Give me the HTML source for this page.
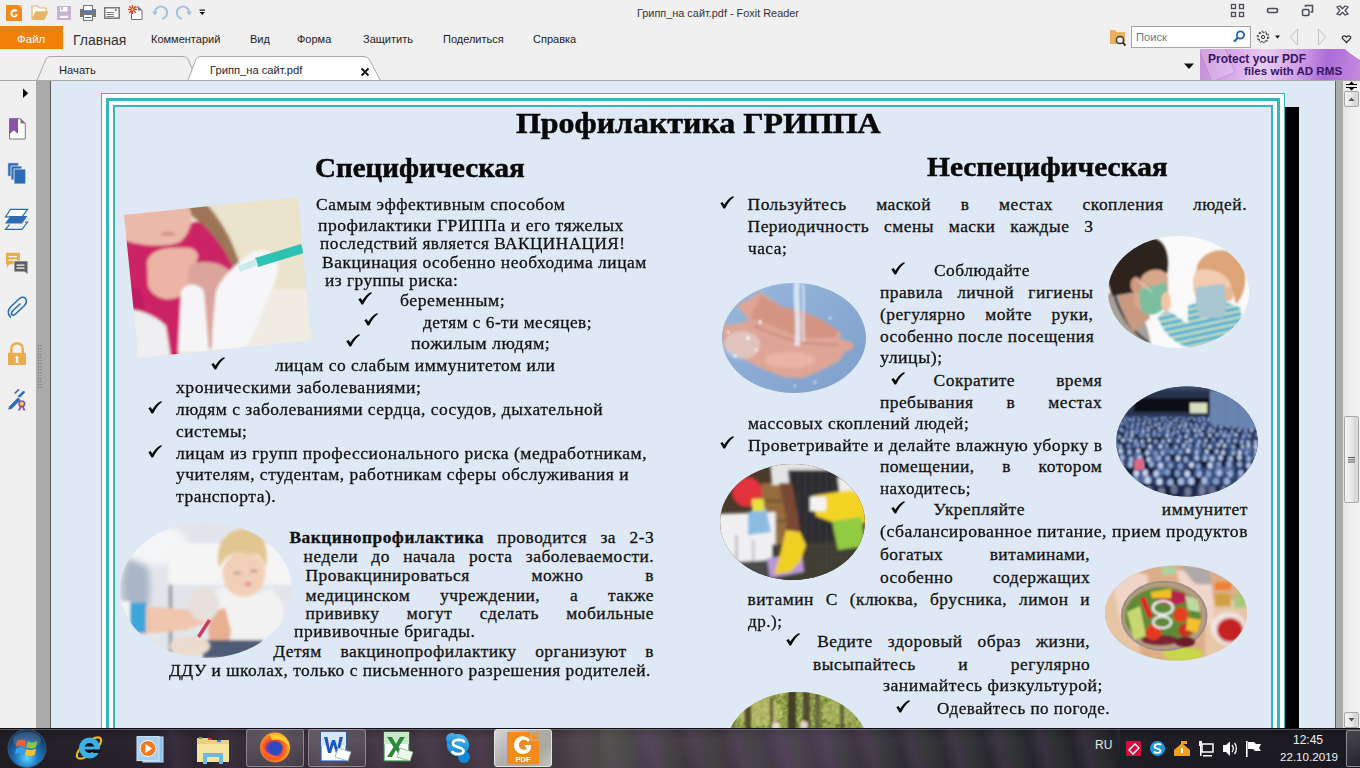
<!DOCTYPE html>
<html><head><meta charset="utf-8">
<style>
*{margin:0;padding:0;box-sizing:border-box}
html,body{width:1360px;height:768px;overflow:hidden;background:#f0f0f0;font-family:"Liberation Sans",sans-serif;position:relative}
.a{position:absolute}
.ui{font-family:"Liberation Sans",sans-serif;font-size:11px;color:#222;white-space:nowrap;line-height:13px}
.doc{font-family:"Liberation Serif",serif;color:#111;white-space:nowrap}
.t{position:absolute;font-family:"Liberation Serif",serif;font-size:17.4px;letter-spacing:0.5px;line-height:20px;color:#121212;white-space:nowrap;text-align:justify;text-align-last:justify;-webkit-text-stroke:0.3px #121212}
.tl{text-align:left;text-align-last:left;transform-origin:0 0}
.hd{font-weight:bold;color:#080808;transform-origin:0 0;-webkit-text-stroke:0.5px #080808}
.ck{position:absolute;font-family:"Liberation Serif",serif;font-size:17px;line-height:20px;color:#111}
</style></head><body>

<!-- ===== TITLE BAR ===== -->
<div id="titlebar" class="a" style="left:0;top:0;width:1360px;height:26px;background:#f0f0f0"></div>
<div class="a ui" style="left:637px;top:7px;font-size:10.9px;color:#333">Грипп_на сайт.pdf - Foxit Reader</div>

<!-- quick access toolbar icons -->
<svg class="a" style="left:0;top:0" width="215" height="26" viewBox="0 0 215 26">
<path d="M6,5 L18.5,5 L22,8.5 L22,21 L6,21 Z" fill="#f28a1e"/>
<path d="M19,5 L22,5 L22,8 Z" fill="#f28a1e" opacity="0.6"/>
<path d="M17.5,10.2 C16,8.6 12.5,8.8 11,11 C9.6,13.3 10.6,16.6 13.4,17.3 C15.6,17.8 17.6,16.4 17.8,14.2 L14.2,14.2 L15.4,15.8 C14.2,16.4 12.6,15.6 12.4,14 C12.2,12.2 14.2,10.8 16,11.8 Z" fill="#fff"/>
<path d="M32,6 L38,6 L39.5,8 L46,8 L46,12 L36,12 L32,19.8 Z" fill="#fff" stroke="#e8b468" stroke-width="1.2"/>
<path d="M35.5,11.5 L48.2,11.5 L44.5,19.9 L32,19.9 Z" fill="#e8b468"/>
<rect x="57" y="6" width="14" height="14" fill="#c6b0d4"/>
<rect x="60" y="7" width="7.5" height="4.5" fill="#fff"/>
<rect x="61" y="7" width="1.8" height="3" fill="#c6b0d4"/>
<rect x="60" y="15.8" width="8" height="2.2" fill="#fff"/>
<rect x="80" y="9" width="16" height="8" fill="#767676"/>
<rect x="83.5" y="5.5" width="9" height="7" fill="#fff" stroke="#767676" stroke-width="1"/>
<rect x="83" y="10.2" width="10" height="1.8" fill="#3f7fc4"/>
<rect x="83.5" y="14.5" width="9" height="6" fill="#fff" stroke="#767676" stroke-width="1"/>
<rect x="85" y="17" width="6" height="1" fill="#3f7fc4"/>
<rect x="104.8" y="7.8" width="14.4" height="10.4" fill="#fff" stroke="#6e6e6e" stroke-width="1.4"/>
<rect x="115" y="9.3" width="1.6" height="1.6" fill="#1a5fb4"/>
<rect x="106.5" y="12" width="7.5" height="0.9" fill="#6e6e6e"/>
<rect x="106.5" y="14" width="7.5" height="0.9" fill="#6e6e6e"/>
<rect x="106.5" y="16" width="7.5" height="0.9" fill="#6e6e6e"/>
<path d="M131.5,10 L138,6.5 L142,10.5 L142,19.5 L131.5,19.5 Z" fill="#fff" stroke="#707070" stroke-width="1"/>
<path d="M138,6.5 L142,10.5 L138,10.5 Z" fill="#707070"/>
<g stroke="#d8421e" stroke-width="1.3"><line x1="128" y1="9.5" x2="137" y2="9.5"/><line x1="132.5" y1="5" x2="132.5" y2="14"/><line x1="129.3" y1="6.3" x2="135.7" y2="12.7"/><line x1="135.7" y1="6.3" x2="129.3" y2="12.7"/></g>
<circle cx="132.5" cy="9.5" r="1" fill="#fff"/>
<path d="M154.8,13 A6.2,6.2 0 1 1 162,18.8" fill="none" stroke="#a4c2e0" stroke-width="2"/>
<path d="M152,11.5 L157.6,11.5 L154.8,15.5 Z" fill="#a4c2e0"/>
<path d="M189.2,13 A6.2,6.2 0 1 0 182,18.8" fill="none" stroke="#a4c2e0" stroke-width="2"/>
<path d="M192,11.5 L186.4,11.5 L189.2,15.5 Z" fill="#a4c2e0"/>
<rect x="199.5" y="9.5" width="5.5" height="1.2" fill="#111"/>
<path d="M199.5,12 L205,12 L202.25,15 Z" fill="#111"/>
</svg>
<!-- window controls -->
<svg class="a" style="left:1225px;top:0" width="135" height="26" viewBox="1225 0 135 26">
<g fill="none" stroke="#4a4e5c" stroke-width="1.3">
<rect x="1231.5" y="4.5" width="4" height="4"/><rect x="1239.5" y="4.5" width="4" height="4"/>
<rect x="1231.5" y="12.5" width="4" height="4"/><rect x="1239.5" y="12.5" width="4" height="4"/>
<rect x="1267.5" y="8.5" width="10" height="4" rx="1.5" stroke-width="1.6"/>
<rect x="1302.5" y="9.5" width="6.5" height="6" rx="1.2" stroke-width="1.5"/>
<path d="M1305.5,7 L1305.5,5.5 L1312.5,5.5 L1312.5,12 L1310.5,12" stroke-width="1.5"/>
</g>
<path d="M1337,7 L1340,6 L1342.5,8.7 L1345,6 L1348,7 L1345,10.5 L1348,14 L1345,15 L1342.5,12.3 L1340,15 L1337,14 L1340,10.5 Z" fill="#fff" stroke="#4a4e5c" stroke-width="1.3"/>
</svg>
<!-- search row -->
<svg class="a" style="left:1105px;top:24px" width="255" height="28" viewBox="1105 24 255 28">
<path d="M1110,30 L1115,30 L1116.5,32 L1125,32 L1125,44 L1110,44 Z" fill="#e8b060"/>
<circle cx="1120" cy="40" r="3.6" fill="#f0f0f0" stroke="#333" stroke-width="1.5"/>
<line x1="1122.6" y1="42.6" x2="1125.5" y2="45.5" stroke="#333" stroke-width="1.8"/>
<rect x="1131.5" y="26.5" width="119" height="21" fill="#fff" stroke="#a6a6a6" stroke-width="1"/>
<circle cx="1240.5" cy="35" r="3.6" fill="none" stroke="#1e64b4" stroke-width="1.8"/>
<line x1="1237.8" y1="37.8" x2="1234" y2="41.6" stroke="#1e64b4" stroke-width="2.2"/>
<g transform="translate(1263,37)"><circle r="4.8" fill="none" stroke="#333" stroke-width="1.1" stroke-dasharray="2 1.6"/><circle r="5.8" fill="none" stroke="#333" stroke-width="1" stroke-dasharray="1.6 2"/><circle r="1.6" fill="none" stroke="#333" stroke-width="1"/></g>
<path d="M1275,35.5 L1280,35.5 L1277.5,38.5 Z" fill="#111"/>
<path d="M1297.5,29 L1290.5,37 L1297.5,45 Z" fill="none" stroke="#c4c4c4" stroke-width="1"/>
<path d="M1318.5,29 L1325.5,37 L1318.5,45 Z" fill="none" stroke="#c4c4c4" stroke-width="1"/>
<path d="M1342.5,38.5 C1341.5,36 1344.5,35 1346.5,37 C1348.5,35 1351.5,36 1350.5,38.5 L1346.5,42.5 Z" fill="none" stroke="#333" stroke-width="1.3"/>
</svg>
<div class="a ui" style="left:1136px;top:31px;color:#6e7888;font-size:11.2px">Поиск</div>

<!-- ===== MENU ROW ===== -->
<div class="a" style="left:0;top:26px;width:63px;height:23px;background:#f0800a"></div>
<div class="a ui" style="left:17px;top:33px;color:#fff;font-size:11.5px">Файл</div>
<div class="a ui" style="left:73px;top:32px;font-size:14px;line-height:16px;color:#333">Главная</div>
<div class="a ui" style="left:151px;top:33px">Комментарий</div>
<div class="a ui" style="left:250px;top:33px">Вид</div>
<div class="a ui" style="left:297px;top:33px">Форма</div>
<div class="a ui" style="left:363px;top:33px">Защитить</div>
<div class="a ui" style="left:443px;top:33px">Поделиться</div>
<div class="a ui" style="left:533px;top:33px">Справка</div>

<!-- ===== TABS ROW ===== -->
<!-- tabs -->
<svg class="a" style="left:0;top:48px" width="400" height="34" viewBox="0 48 400 34">
<path d="M37,80.5 L46,59 Q47.5,56.5 50,56.5 L183,56.5 Q186,56.5 188,59 L197,80.5" fill="#f0f0f0" stroke="#a9a9a9" stroke-width="1"/>
<path d="M188,80.5 L196,59 Q197.5,56.5 200,56.5 L364,56.5 Q367,56.5 369,59 L380.5,80.5" fill="#fff" stroke="#a9a9a9" stroke-width="1"/>
<path d="M361.5,68.5 L368.5,75.5 M368.5,68.5 L361.5,75.5" stroke="#111" stroke-width="1.8"/>
</svg>
<div class="a ui" style="left:59px;top:64px;font-size:11.2px;color:#1e1e2a">Начать</div>
<div class="a ui" style="left:210px;top:64px;font-size:11.2px;color:#1e1e2a">Грипп_на сайт.pdf</div>
<svg class="a" style="left:1183px;top:62px" width="12" height="8" viewBox="0 0 12 8"><path d="M1,1.5 L11,1.5 L6,7 Z" fill="#111"/></svg>
<!-- ad banner -->
<div class="a" style="left:1200px;top:49px;width:160px;height:31px;background:linear-gradient(100deg,#c58cd8 0%,#dcb0ec 25%,#e9ccf3 40%,#cf9ee6 62%,#ac6cd6 78%,#c48ae0 100%);overflow:hidden">
<div class="a" style="left:4px;top:-6px;width:26px;height:36px;background:rgba(255,255,255,0.18);border:1px solid rgba(150,90,180,0.35);transform:rotate(-22deg)"></div>
<svg class="a" style="left:143px;top:0" width="17" height="12" viewBox="0 0 17 12"><path d="M2,0 L17,0 L17,11 C13,8 8,5 2,0 Z" fill="#f0f0f0"/><path d="M2,0 C8,5 13,8 17,11 L12,6 Z" fill="#fff"/></svg>
</div>
<div class="a" style="left:1208px;top:52px;font:bold 12px/14px 'Liberation Sans',sans-serif;color:#3a1462;white-space:nowrap">Protect your PDF</div>
<div class="a" style="left:1244px;top:64px;font:bold 11.6px/14px 'Liberation Sans',sans-serif;color:#3a1462;white-space:nowrap">files with AD RMS</div>

<div class="a" style="left:0;top:80px;width:1360px;height:1px;background:#a8a8a8"></div>

<!-- ===== LEFT PANEL ===== -->
<div class="a" style="left:0;top:81px;width:36px;height:647px;background:#f0f0f0"></div>
<div class="a" style="left:36px;top:81px;width:15px;height:647px;background:#ababab;border-right:1px solid #5c5c5c"></div>

<!-- left sidebar icons -->
<svg class="a" style="left:0;top:81px" width="50" height="340" viewBox="0 81 50 340">
<path d="M23,88.6 L28.2,93.3 L23,98 Z" fill="#0a0a0a"/>
<path d="M9.5,118.8 L20.5,118.8 L25.3,123.6 L25.3,139 L9.5,139 Z" fill="#fff" stroke="#7a7a7a" stroke-width="1"/>
<path d="M20.5,118.3 L25.8,123.6 L20.5,123.6 Z" fill="#7a7a7a"/>
<path d="M9.6,118.3 L18,118.3 L18,134 L13.8,130.2 L9.6,134 Z" fill="#8d52a9"/>
<rect x="7.8" y="162.8" width="10.9" height="13.5" fill="#2d6cb4" stroke="#f0f0f0" stroke-width="0.8"/>
<rect x="11" y="166" width="10.9" height="14" fill="#2d6cb4" stroke="#f0f0f0" stroke-width="0.8"/>
<rect x="14" y="169" width="11.8" height="15" fill="#2d6cb4" stroke="#f0f0f0" stroke-width="0.8"/>
<path d="M10.5,209.3 L27.5,209.3 L22,216.8 L5.5,216.8 Z" fill="#fff" stroke="#2d6cb4" stroke-width="1.2"/>
<path d="M10.5,216 L27.5,216 L22,223.6 L5,223.6 Z" fill="#2d6cb4"/>
<path d="M25,222 L27.5,222 L22,229.3 L5.5,229.3 L9.5,224.5" fill="none" stroke="#2d6cb4" stroke-width="1.2"/>
<path d="M6,252.8 L20,252.8 L20,264.3 L9.5,264.3 L7,267.5 L7,264.3 L6,264.3 Z" fill="#e9ad4f"/>
<rect x="8.5" y="256" width="8.5" height="1.2" fill="#fff"/><rect x="8.5" y="259.5" width="8.5" height="1.2" fill="#fff"/>
<path d="M14,260.9 L27.9,260.9 L27.9,274.5 L24.5,271.9 L14,271.9 Z" fill="#5f5f5f" stroke="#f0f0f0" stroke-width="0.8"/>
<rect x="16.5" y="264.5" width="8" height="1.2" fill="#fff"/><rect x="16.5" y="267.5" width="8" height="1.2" fill="#fff"/>
<path d="M10.5,317 C7,313.5 8,309.5 11,306.5 L19.5,298.5 C22,296.5 25,297 26,299.5 C27,302 26,304 24,306 L15.5,314 C14,315.5 12.5,315.5 11.8,314.5 C11,313.5 11.5,312 13,310.5 L20,304" fill="none" stroke="#2d6cb4" stroke-width="1.6" stroke-linecap="round"/>
<path d="M11.2,353.5 L11.2,349 A5.8,5.8 0 0 1 22.8,349 L22.8,353.5" fill="none" stroke="#e9ad4f" stroke-width="2.4"/>
<rect x="8" y="352.8" width="18" height="12.2" fill="#e9ad4f"/>
<circle cx="17" cy="357.5" r="1.5" fill="#fff"/><path d="M16.2,358 L17.8,358 L18.3,363 L15.7,363 Z" fill="#fff"/>
<path d="M8,409.5 L9.2,406.5 L18,397.5 L20.5,400 L11.5,409 Z" fill="#2d6cb4"/>
<path d="M17.5,396.5 L22.5,391.5 C23.5,390.5 25,391 25,392.5 L20,397.5 Z" fill="#2d6cb4"/>
<path d="M14,393 L18.5,388.8 L19.6,389.9 L15.2,394.1 Z" fill="#2d6cb4"/>
<circle cx="21.8" cy="403.8" r="3.6" fill="#8c52a9"/><circle cx="21.8" cy="403.8" r="2" fill="#f5d44a"/>
<path d="M18,410.5 L20,406 L21.5,407 L20,410.5 Z M25.5,410.5 L23.5,406 L22,407 L23.5,410.5 Z" fill="#8c52a9"/>
<g fill="#777">
<rect x="38" y="345" width="1.2" height="1.2"/><rect x="40.5" y="345" width="1.2" height="1.2"/>
<rect x="38" y="348" width="1.2" height="1.2"/><rect x="40.5" y="348" width="1.2" height="1.2"/>
<rect x="38" y="351" width="1.2" height="1.2"/><rect x="40.5" y="351" width="1.2" height="1.2"/>
<rect x="38" y="354" width="1.2" height="1.2"/><rect x="40.5" y="354" width="1.2" height="1.2"/>
<rect x="38" y="357" width="1.2" height="1.2"/><rect x="40.5" y="357" width="1.2" height="1.2"/>
<rect x="38" y="360" width="1.2" height="1.2"/><rect x="40.5" y="360" width="1.2" height="1.2"/>
<rect x="38" y="363" width="1.2" height="1.2"/><rect x="40.5" y="363" width="1.2" height="1.2"/>
<rect x="38" y="366" width="1.2" height="1.2"/><rect x="40.5" y="366" width="1.2" height="1.2"/>
<rect x="38" y="369" width="1.2" height="1.2"/><rect x="40.5" y="369" width="1.2" height="1.2"/>
<rect x="38" y="372" width="1.2" height="1.2"/><rect x="40.5" y="372" width="1.2" height="1.2"/>
<rect x="38" y="375" width="1.2" height="1.2"/><rect x="40.5" y="375" width="1.2" height="1.2"/>
<rect x="38" y="378" width="1.2" height="1.2"/><rect x="40.5" y="378" width="1.2" height="1.2"/>
<rect x="38" y="381" width="1.2" height="1.2"/><rect x="40.5" y="381" width="1.2" height="1.2"/>
<rect x="38" y="384" width="1.2" height="1.2"/><rect x="40.5" y="384" width="1.2" height="1.2"/>
<rect x="38" y="387" width="1.2" height="1.2"/><rect x="40.5" y="387" width="1.2" height="1.2"/>
</g>
</svg>

<!-- ===== VIEWER ===== -->
<div id="viewer" class="a" style="left:51px;top:81px;width:1284px;height:647px;background:#dfe9f5;overflow:hidden">
</div>
<svg width="0" height="0" style="position:absolute"><defs>
<symbol id="ck" viewBox="0 0 14 13"><path d="M0.3 7.2 L2.6 5.9 L4.3 8.6 C6.6 4.9 9.4 1.9 13.2 0 L13.8 1.2 C10.6 3.5 7.5 7.3 5.1 12.6 L3.6 12.6 Z" fill="#0a0a0a"/></symbol>
</defs></svg>
<!-- page frame -->
<div class="a" style="left:101px;top:93px;width:1184px;height:700px;border:1px solid #3ab7bf;background:#fff"></div>
<div class="a" style="left:106px;top:98px;width:1174px;height:700px;border:3px solid #36b5bd"></div>
<div class="a" style="left:113px;top:105px;width:1160px;height:700px;border:2px solid #38b6be;background:#dfe9f5"></div>
<div class="a" style="left:1285px;top:107px;width:14px;height:630px;background:#000"></div>
<!--PHOTOS-->
<svg class="a" style="left:0;top:0" width="1360" height="768" viewBox="0 0 1360 768">
<defs>
<filter id="b1" x="-10%" y="-10%" width="120%" height="120%"><feGaussianBlur stdDeviation="1.5"/></filter>
<filter id="b2" x="-10%" y="-10%" width="120%" height="120%"><feGaussianBlur stdDeviation="3"/></filter>
<filter id="b05" x="-5%" y="-5%" width="110%" height="110%"><feGaussianBlur stdDeviation="0.8"/></filter>
<filter id="nz1" x="0" y="0" width="100%" height="100%" color-interpolation-filters="sRGB"><feTurbulence type="fractalNoise" baseFrequency="0.5" numOctaves="2" seed="7"/><feColorMatrix type="matrix" values="1.8 0 0 0 -0.58  1.9 0 0 0 -0.5  2.0 0 0 0 -0.33  0 0 0 0 1"/><feGaussianBlur stdDeviation="0.5"/></filter>
<filter id="nz2" x="0" y="0" width="100%" height="100%" color-interpolation-filters="sRGB"><feTurbulence type="fractalNoise" baseFrequency="0.25" numOctaves="2" seed="4"/><feColorMatrix type="matrix" values="1.5 0 0 0 -0.25  1.5 0 0 0 -0.18  1.0 0 0 0 -0.3  0 0 0 0 1"/><feGaussianBlur stdDeviation="0.7"/></filter>
<filter id="nz3" x="0" y="0" width="100%" height="100%" color-interpolation-filters="sRGB"><feTurbulence type="fractalNoise" baseFrequency="0.6" numOctaves="1" seed="2"/><feColorMatrix type="matrix" values="1.2 0 0 0 -0.35  1.1 0 0 0 -0.33  0.9 0 0 0 -0.3  0 0 0 0 1"/></filter>
<clipPath id="c1"><polygon points="124,215 298,197 311,340 138.5,358"/></clipPath>
<clipPath id="c2"><ellipse cx="206" cy="590" rx="86" ry="68"/></clipPath>
<clipPath id="c3"><ellipse cx="1178.5" cy="292" rx="70.5" ry="56"/></clipPath>
<clipPath id="c4"><ellipse cx="794" cy="338" rx="72" ry="55"/></clipPath>
<clipPath id="c5"><ellipse cx="1187" cy="441.5" rx="70.7" ry="55"/></clipPath>
<clipPath id="c6"><ellipse cx="792.5" cy="522" rx="72.5" ry="58"/></clipPath>
<clipPath id="c7"><ellipse cx="1176" cy="613" rx="71" ry="47.5"/></clipPath>
<clipPath id="c8"><ellipse cx="797" cy="750" rx="72" ry="58"/></clipPath>
<linearGradient id="g4bg" x1="0" y1="0" x2="1" y2="1"><stop offset="0" stop-color="#9ab8dc"/><stop offset="1" stop-color="#7c9ecb"/></linearGradient>
<pattern id="crowd" width="7" height="7" patternUnits="userSpaceOnUse"><rect width="7" height="7" fill="#4a689c"/><circle cx="2.5" cy="2.5" r="1.8" fill="#9cb6dc"/><rect x="4" y="3.5" width="3" height="3.5" fill="#1f2c48"/></pattern>
<pattern id="stripes" width="6" height="6" patternUnits="userSpaceOnUse" patternTransform="rotate(-12)"><rect width="6" height="6" fill="#58b2d6"/><rect y="3" width="6" height="2" fill="#dce6b4"/></pattern>
<pattern id="apron" width="3.5" height="4" patternUnits="userSpaceOnUse"><rect width="3.5" height="4" fill="#1e1e22"/><rect width="0.8" height="4" fill="#58585e"/></pattern>
<pattern id="speck" width="5" height="5" patternUnits="userSpaceOnUse"><rect width="5" height="5" fill="#3c3a30"/><rect x="1" y="1" width="1.5" height="1.5" fill="#6a6450"/><rect x="3" y="3" width="1" height="1" fill="#222"/></pattern>
</defs>

<!-- PHOTO 1: girl vaccination (rotated rect) -->
<g clip-path="url(#c1)">
<rect x="110" y="190" width="210" height="175" fill="#ebe3cc"/>
<g filter="url(#b1)">
<rect x="248" y="289" width="70" height="75" fill="#f0ece4"/>
<!-- shirt -->
<polygon points="110,212 150,222 185,224 210,220 228,235 238,262 238,284 226,290 205,300 182,336 176,365 110,365" fill="#cc2166"/>
<polygon points="118,280 140,290 150,330 120,336" fill="#c01e60"/>
<!-- face -->
<path d="M110,206 L190,200 C194,215 192,232 180,242 C165,248 140,246 124,240 L110,236 Z" fill="#ebb9a9"/>
<ellipse cx="168" cy="234" rx="8" ry="2.2" fill="#d8908a"/>
<!-- hair -->
<path d="M188,204 L205,203 C220,218 232,240 240,265 L234,270 C226,250 212,230 192,216 Z" fill="#9c7656"/>
<!-- hand -->
<path d="M147,262 C150,250 165,246 190,248 C198,250 200,256 196,262 C200,268 198,276 190,280 C192,288 186,296 176,298 C164,302 152,296 148,286 Z" fill="#ecb4a4"/>
<!-- arm -->
<path d="M189,266 C196,260 222,260 230,272 L230,320 C228,340 222,348 210,348 L196,340 C190,320 186,290 189,266 Z" fill="#dba59c"/>
<!-- bottom-left white -->
<path d="M110,312 C125,306 150,310 166,326 L172,365 L110,365 Z" fill="#eeeef0"/>
<!-- left glove finger -->
<path d="M181,292 C184,282 200,282 204,292 L209,352 L178,352 Z" fill="#f5f5f8"/>
<!-- right glove -->
<path d="M216,292 C220,278 238,262 252,252 C268,246 280,254 278,270 C276,285 266,300 260,318 C254,332 248,345 244,352 L212,352 C212,330 214,310 216,292 Z" fill="#f6f6f9"/>
</g>
<polygon points="255,258 301,244 304,253 258,267" fill="#2ec2b2"/>
<polygon points="238,266 256,259 258,265 240,272" fill="#c8ece8"/>
</g>

<!-- PHOTO 2: baby vaccination oval -->
<g clip-path="url(#c2)">
<rect x="115" y="518" width="185" height="145" fill="#e2e6ec"/>
<g filter="url(#b2)">
<ellipse cx="136" cy="588" rx="14" ry="34" fill="#aab6c6"/>
<ellipse cx="155" cy="545" rx="32" ry="20" fill="#f4f6f8"/>
</g>
<g filter="url(#b1)">
<rect x="168.5" y="543.3" width="125" height="41.4" fill="#f5f5f5"/>
<rect x="168.5" y="584.7" width="4" height="70" fill="#a2a6ac"/>
<!-- shirt -->
<polygon points="209,593.7 227.1,585.7 251.3,595.8 271.5,587.7 283.6,605.9 283.6,628.1 263.4,644.2 231.1,648.3 211,636.1" fill="#f2f2f2"/>
<!-- face & hair -->
<ellipse cx="244" cy="574" rx="21.5" ry="23" fill="#f2d0b8"/>
<path d="M219,568 C214,545 226,529 244,529 C262,529 270,545 266,568 C262,556 256,551 250,555 C240,549 228,551 219,568 Z" fill="#e2c690"/>
<ellipse cx="237" cy="573" rx="4" ry="1.2" fill="#b89078"/><ellipse cx="254" cy="571" rx="4" ry="1.2" fill="#b89078"/>
<ellipse cx="248" cy="584" rx="3.5" ry="2" fill="#d89088"/>
<!-- baby arm -->
<polygon points="211,612 225,608 231,630 228,652 213,652 208,632" fill="#e8b090"/>
<rect x="203" y="640" width="60" height="18" fill="#505c74"/>
<!-- nurse arm -->
<polygon points="115,603.8 190.8,609.9 206.9,603.8 215,616 202.9,624 186.7,630 142.3,634.1 115,632.1" fill="#f0c6ae"/>
<rect x="130" y="603" width="16" height="30" fill="#3ea6da"/>
<rect x="115" y="601" width="15" height="31" fill="#f4f4f4"/>
<ellipse cx="204" cy="604" rx="15" ry="17" fill="#e8e0dc"/>
<ellipse cx="190" cy="646" rx="20" ry="10" fill="#ecdcd0"/>
</g>
<polygon points="197,636 208,619 211,621 200,638" fill="#c84060"/>
</g>

<!-- PHOTO 3: masks oval -->
<g clip-path="url(#c3)">
<rect x="1105" y="232" width="150" height="120" fill="#fafafa"/>
<g filter="url(#b05)">
<!-- boy shirt -->
<path d="M1100,296 L1118,291 C1135,298 1148,318 1152,352 L1100,352 Z" fill="#a8a098"/>
<path d="M1114,292 C1118,312 1132,332 1148,342" stroke="#3a3a46" stroke-width="2.5" fill="none"/>
<path d="M1118,292 L1140,288 L1150,318 L1134,332 C1125,322 1120,305 1118,292 Z" fill="#c99a80"/>
<!-- face -->
<path d="M1133,262 C1148,255 1165,262 1168,278 L1168,302 C1160,316 1142,316 1134,304 Z" fill="#d8a78b"/>
<!-- hair -->
<path d="M1107,278 C1110,250 1132,236 1152,238 C1166,240 1170,256 1167,274 C1158,266 1148,270 1142,276 L1136,292 L1112,296 Z" fill="#2d211c"/>
<ellipse cx="1136" cy="285" rx="5.5" ry="8" fill="#cf9a80"/>
<!-- mask -->
<path d="M1139,290 L1166,282 L1168,302 C1162,314 1150,318 1142,312 C1139,302 1139,296 1139,290 Z" fill="#7cbf9e"/>
<line x1="1137" y1="280" x2="1152" y2="292" stroke="#eee" stroke-width="0.8"/>
<!-- toddler shirt -->
<path d="M1188,306 C1202,300 1228,300 1240,308 L1248,352 L1188,352 Z" fill="url(#stripes)"/>
<path d="M1158,318 C1162,310 1170,310 1176,316 L1196,330 L1190,348 C1176,344 1164,334 1158,318 Z" fill="url(#stripes)"/>
<ellipse cx="1166" cy="302" rx="5" ry="10" fill="#f0c6aa"/>
<!-- toddler head -->
<ellipse cx="1213" cy="284" rx="20" ry="26" fill="#f2ccb0"/>
<path d="M1197,266 C1205,246 1236,244 1244,266 C1248,286 1242,298 1236,304 L1230,282 C1222,270 1208,268 1197,270 Z" fill="#dca678"/>
<path d="M1196,287 L1224,284 C1228,296 1228,310 1222,318 L1200,318 C1196,308 1195,296 1196,287 Z" fill="#aac6d0"/>
<ellipse cx="1229" cy="294" rx="4.5" ry="7" fill="#e8b898"/>
</g>
</g>

<!-- PHOTO 4: hands water -->
<g clip-path="url(#c4)">
<rect x="720" y="280" width="150" height="115" fill="url(#g4bg)"/>
<g filter="url(#b1)">
<polygon points="737.1,305.6 760.8,292 781.1,306.4 804.8,312.3 820.1,319.1 838.7,331 842.1,336 837,337.7 848.8,341.1 853.9,344.5 852.2,349.6 845.5,351.3 838.7,361.4 815,373.3 801.4,378.4 782.8,376.7 760.8,368.2 735.4,354.7 723.5,347.9 721.9,325.9 733.7,324.2 748.9,320.8" fill="#dea596"/>
<polygon points="760.8,295 781.1,306.4 804.8,312.3 820.1,319.1 838.7,331 835,338 800,338 770,325 750,318" fill="#d49484"/>
<path d="M754,326 C770,333 785,339 794.7,341 C810,344 825,345 838.7,344.5" stroke="#c07e70" stroke-width="1.5" fill="none"/>
<ellipse cx="790" cy="360" rx="25" ry="8" fill="#e8b4a6"/>
<ellipse cx="742" cy="345" rx="18" ry="14" fill="#e4e8f0" opacity="0.45"/>
</g>
<g filter="url(#b05)" opacity="0.8">
<path d="M797,282 C795,300 800,322 797,346" stroke="#e8f0fa" stroke-width="6" fill="none"/>
<path d="M803,284 C805,300 802,322 804,342" stroke="#dce8f6" stroke-width="2.5" fill="none"/>
<circle cx="760" cy="322" r="2" fill="#fff"/><circle cx="735" cy="356" r="1.8" fill="#fff"/><circle cx="748" cy="338" r="2.2" fill="#fff"/>
<circle cx="728" cy="332" r="1.5" fill="#fff"/><circle cx="756" cy="350" r="1.6" fill="#fff"/>
<circle cx="830" cy="318" r="1.5" fill="#eef"/><circle cx="815" cy="382" r="1.5" fill="#eef"/><circle cx="795" cy="386" r="1.2" fill="#eef"/>
</g>
</g>

<!-- PHOTO 5: crowd -->
<g clip-path="url(#c5)">
<rect x="1112" y="384" width="150" height="118" fill="#2e4474"/>
<g filter="url(#b05)">
<rect x="1112.9" y="418.6" width="3.2" height="2.8" fill="#1a2440"/>
<ellipse cx="1114.4" cy="417.7" rx="0.9" ry="1.1" fill="#c6d2ec"/>
<rect x="1118.4" y="417.2" width="3.2" height="2.8" fill="#26365c"/>
<ellipse cx="1120.0" cy="416.4" rx="0.9" ry="1.1" fill="#a4b8dc"/>
<rect x="1121.3" y="417.2" width="3.2" height="2.8" fill="#1a2440"/>
<ellipse cx="1122.9" cy="416.4" rx="0.9" ry="1.1" fill="#c6d2ec"/>
<rect x="1125.0" y="417.2" width="3.2" height="2.8" fill="#26365c"/>
<ellipse cx="1126.6" cy="416.3" rx="0.9" ry="1.1" fill="#b8c8e6"/>
<rect x="1132.5" y="417.0" width="3.2" height="2.8" fill="#26365c"/>
<ellipse cx="1134.1" cy="416.2" rx="0.9" ry="1.1" fill="#a4b8dc"/>
<rect x="1136.6" y="417.0" width="3.2" height="2.8" fill="#26365c"/>
<ellipse cx="1138.2" cy="416.1" rx="0.9" ry="1.1" fill="#a4b8dc"/>
<rect x="1143.1" y="417.0" width="3.2" height="2.8" fill="#3c5488"/>
<ellipse cx="1144.7" cy="416.2" rx="0.9" ry="1.1" fill="#96acd6"/>
<rect x="1145.5" y="418.8" width="3.2" height="2.8" fill="#26365c"/>
<ellipse cx="1147.1" cy="417.9" rx="0.9" ry="1.1" fill="#96acd6"/>
<rect x="1152.4" y="419.0" width="3.2" height="2.8" fill="#3c5488"/>
<ellipse cx="1153.9" cy="418.1" rx="0.9" ry="1.1" fill="#7e98c8"/>
<rect x="1155.1" y="418.9" width="3.2" height="2.8" fill="#1a2440"/>
<ellipse cx="1156.7" cy="418.0" rx="0.9" ry="1.1" fill="#b8c8e6"/>
<rect x="1160.3" y="418.1" width="3.2" height="2.8" fill="#2e4270"/>
<ellipse cx="1161.9" cy="417.2" rx="0.9" ry="1.1" fill="#c6d2ec"/>
<rect x="1163.6" y="417.5" width="3.2" height="2.8" fill="#566ea0"/>
<ellipse cx="1165.2" cy="416.7" rx="0.9" ry="1.1" fill="#b8c8e6"/>
<rect x="1169.0" y="417.8" width="3.2" height="2.8" fill="#1a2440"/>
<ellipse cx="1170.6" cy="416.9" rx="0.9" ry="1.1" fill="#96acd6"/>
<rect x="1174.8" y="418.9" width="3.2" height="2.8" fill="#566ea0"/>
<ellipse cx="1176.4" cy="418.1" rx="0.9" ry="1.1" fill="#b8c8e6"/>
<rect x="1177.8" y="417.5" width="3.2" height="2.8" fill="#1a2440"/>
<ellipse cx="1179.4" cy="416.7" rx="0.9" ry="1.1" fill="#c6d2ec"/>
<rect x="1182.1" y="418.1" width="3.2" height="2.8" fill="#1a2440"/>
<ellipse cx="1183.7" cy="417.3" rx="0.9" ry="1.1" fill="#96acd6"/>
<rect x="1187.9" y="418.9" width="3.2" height="2.8" fill="#121c34"/>
<ellipse cx="1189.5" cy="418.1" rx="0.9" ry="1.1" fill="#b8c8e6"/>
<rect x="1191.2" y="418.5" width="3.2" height="2.8" fill="#121c34"/>
<ellipse cx="1192.8" cy="417.7" rx="0.9" ry="1.1" fill="#a4b8dc"/>
<rect x="1197.1" y="418.7" width="3.2" height="2.8" fill="#566ea0"/>
<ellipse cx="1198.7" cy="417.9" rx="0.9" ry="1.1" fill="#a4b8dc"/>
<rect x="1201.1" y="417.5" width="3.2" height="2.8" fill="#3c5488"/>
<ellipse cx="1202.7" cy="416.6" rx="0.9" ry="1.1" fill="#c6d2ec"/>
<rect x="1207.4" y="418.9" width="3.2" height="2.8" fill="#1a2440"/>
<ellipse cx="1209.0" cy="418.0" rx="0.9" ry="1.1" fill="#c6d2ec"/>
<rect x="1211.5" y="417.1" width="3.2" height="2.8" fill="#2e4270"/>
<ellipse cx="1213.1" cy="416.2" rx="0.9" ry="1.1" fill="#a4b8dc"/>
<rect x="1216.1" y="419.0" width="3.2" height="2.8" fill="#2e4270"/>
<ellipse cx="1217.7" cy="418.2" rx="0.9" ry="1.1" fill="#96acd6"/>
<rect x="1220.3" y="417.9" width="3.2" height="2.8" fill="#1a2440"/>
<ellipse cx="1221.9" cy="417.1" rx="0.9" ry="1.1" fill="#7e98c8"/>
<rect x="1223.3" y="418.6" width="3.2" height="2.8" fill="#2e4270"/>
<ellipse cx="1224.9" cy="417.8" rx="0.9" ry="1.1" fill="#7e98c8"/>
<rect x="1226.4" y="418.8" width="3.2" height="2.8" fill="#566ea0"/>
<ellipse cx="1228.0" cy="418.0" rx="0.9" ry="1.1" fill="#a4b8dc"/>
<rect x="1231.0" y="419.0" width="3.2" height="2.8" fill="#26365c"/>
<ellipse cx="1232.6" cy="418.2" rx="0.9" ry="1.1" fill="#c6d2ec"/>
<rect x="1237.3" y="416.9" width="3.2" height="2.8" fill="#3c5488"/>
<ellipse cx="1238.9" cy="416.1" rx="0.9" ry="1.1" fill="#7e98c8"/>
<rect x="1241.2" y="417.4" width="3.2" height="2.8" fill="#121c34"/>
<ellipse cx="1242.8" cy="416.5" rx="0.9" ry="1.1" fill="#7e98c8"/>
<rect x="1247.0" y="417.7" width="3.2" height="2.8" fill="#2e4270"/>
<ellipse cx="1248.6" cy="416.9" rx="0.9" ry="1.1" fill="#7e98c8"/>
<rect x="1251.0" y="417.3" width="3.2" height="2.8" fill="#26365c"/>
<ellipse cx="1252.6" cy="416.5" rx="0.9" ry="1.1" fill="#7e98c8"/>
<rect x="1255.5" y="417.9" width="3.2" height="2.8" fill="#2e4270"/>
<ellipse cx="1257.0" cy="417.1" rx="0.9" ry="1.1" fill="#96acd6"/>
<rect x="1261.3" y="417.1" width="3.2" height="2.8" fill="#3c5488"/>
<ellipse cx="1262.9" cy="416.2" rx="0.9" ry="1.1" fill="#7e98c8"/>
<rect x="1110.7" y="421.9" width="3.6" height="3.1" fill="#2e4270"/>
<ellipse cx="1112.5" cy="420.9" rx="1.0" ry="1.2" fill="#b8c8e6"/>
<rect x="1115.8" y="420.7" width="3.6" height="3.1" fill="#2e4270"/>
<ellipse cx="1117.6" cy="419.8" rx="1.0" ry="1.2" fill="#c6d2ec"/>
<rect x="1123.1" y="420.6" width="3.6" height="3.1" fill="#3c5488"/>
<ellipse cx="1124.9" cy="419.7" rx="1.0" ry="1.2" fill="#b8c8e6"/>
<rect x="1127.8" y="420.0" width="3.6" height="3.1" fill="#3c5488"/>
<ellipse cx="1129.6" cy="419.1" rx="1.0" ry="1.2" fill="#c6d2ec"/>
<rect x="1131.6" y="420.7" width="3.6" height="3.1" fill="#2e4270"/>
<ellipse cx="1133.4" cy="419.7" rx="1.0" ry="1.2" fill="#c6d2ec"/>
<rect x="1137.2" y="420.6" width="3.6" height="3.1" fill="#2e4270"/>
<ellipse cx="1139.0" cy="419.7" rx="1.0" ry="1.2" fill="#b8c8e6"/>
<rect x="1143.4" y="422.2" width="3.6" height="3.1" fill="#2e4270"/>
<ellipse cx="1145.2" cy="421.2" rx="1.0" ry="1.2" fill="#96acd6"/>
<rect x="1148.1" y="420.8" width="3.6" height="3.1" fill="#121c34"/>
<ellipse cx="1149.9" cy="419.8" rx="1.0" ry="1.2" fill="#96acd6"/>
<rect x="1153.9" y="420.9" width="3.6" height="3.1" fill="#3c5488"/>
<ellipse cx="1155.7" cy="419.9" rx="1.0" ry="1.2" fill="#7e98c8"/>
<rect x="1160.6" y="421.7" width="3.6" height="3.1" fill="#121c34"/>
<ellipse cx="1162.3" cy="420.8" rx="1.0" ry="1.2" fill="#96acd6"/>
<rect x="1165.9" y="421.6" width="3.6" height="3.1" fill="#3c5488"/>
<ellipse cx="1167.7" cy="420.6" rx="1.0" ry="1.2" fill="#7e98c8"/>
<rect x="1171.6" y="421.5" width="3.6" height="3.1" fill="#26365c"/>
<ellipse cx="1173.4" cy="420.6" rx="1.0" ry="1.2" fill="#a4b8dc"/>
<rect x="1174.9" y="421.5" width="3.6" height="3.1" fill="#2e4270"/>
<ellipse cx="1176.7" cy="420.6" rx="1.0" ry="1.2" fill="#96acd6"/>
<rect x="1179.8" y="422.4" width="3.6" height="3.1" fill="#26365c"/>
<ellipse cx="1181.5" cy="421.4" rx="1.0" ry="1.2" fill="#96acd6"/>
<rect x="1182.2" y="420.7" width="3.6" height="3.1" fill="#566ea0"/>
<ellipse cx="1184.0" cy="419.8" rx="1.0" ry="1.2" fill="#96acd6"/>
<rect x="1186.2" y="421.1" width="3.6" height="3.1" fill="#2e4270"/>
<ellipse cx="1187.9" cy="420.1" rx="1.0" ry="1.2" fill="#7e98c8"/>
<rect x="1192.7" y="420.6" width="3.6" height="3.1" fill="#1a2440"/>
<ellipse cx="1194.5" cy="419.6" rx="1.0" ry="1.2" fill="#b8c8e6"/>
<rect x="1198.2" y="422.0" width="3.6" height="3.1" fill="#2e4270"/>
<ellipse cx="1200.0" cy="421.1" rx="1.0" ry="1.2" fill="#a4b8dc"/>
<rect x="1202.6" y="420.1" width="3.6" height="3.1" fill="#3c5488"/>
<ellipse cx="1204.4" cy="419.1" rx="1.0" ry="1.2" fill="#c6d2ec"/>
<rect x="1207.0" y="420.8" width="3.6" height="3.1" fill="#3c5488"/>
<ellipse cx="1208.7" cy="419.8" rx="1.0" ry="1.2" fill="#c6d2ec"/>
<rect x="1213.7" y="421.0" width="3.6" height="3.1" fill="#2e4270"/>
<ellipse cx="1215.5" cy="420.0" rx="1.0" ry="1.2" fill="#c6d2ec"/>
<rect x="1217.9" y="420.4" width="3.6" height="3.1" fill="#121c34"/>
<ellipse cx="1219.7" cy="419.4" rx="1.0" ry="1.2" fill="#7e98c8"/>
<rect x="1222.2" y="420.3" width="3.6" height="3.1" fill="#3c5488"/>
<ellipse cx="1224.0" cy="419.4" rx="1.0" ry="1.2" fill="#a4b8dc"/>
<rect x="1229.1" y="420.9" width="3.6" height="3.1" fill="#121c34"/>
<ellipse cx="1230.8" cy="419.9" rx="1.0" ry="1.2" fill="#b8c8e6"/>
<rect x="1234.8" y="420.8" width="3.6" height="3.1" fill="#566ea0"/>
<ellipse cx="1236.6" cy="419.8" rx="1.0" ry="1.2" fill="#c6d2ec"/>
<rect x="1240.6" y="421.2" width="3.6" height="3.1" fill="#2e4270"/>
<ellipse cx="1242.4" cy="420.2" rx="1.0" ry="1.2" fill="#7e98c8"/>
<rect x="1245.2" y="422.2" width="3.6" height="3.1" fill="#121c34"/>
<ellipse cx="1247.0" cy="421.2" rx="1.0" ry="1.2" fill="#c6d2ec"/>
<rect x="1249.6" y="421.2" width="3.6" height="3.1" fill="#1a2440"/>
<ellipse cx="1251.4" cy="420.2" rx="1.0" ry="1.2" fill="#7e98c8"/>
<rect x="1254.2" y="421.2" width="3.6" height="3.1" fill="#26365c"/>
<ellipse cx="1255.9" cy="420.2" rx="1.0" ry="1.2" fill="#b8c8e6"/>
<rect x="1257.0" y="421.5" width="3.6" height="3.1" fill="#26365c"/>
<ellipse cx="1258.8" cy="420.5" rx="1.0" ry="1.2" fill="#7e98c8"/>
<rect x="1111.3" y="425.1" width="4.0" height="3.5" fill="#26365c"/>
<ellipse cx="1113.3" cy="424.0" rx="1.1" ry="1.4" fill="#b8c8e6"/>
<rect x="1119.6" y="424.4" width="4.0" height="3.5" fill="#26365c"/>
<ellipse cx="1121.6" cy="423.4" rx="1.1" ry="1.4" fill="#b8c8e6"/>
<rect x="1124.3" y="425.0" width="4.0" height="3.5" fill="#121c34"/>
<ellipse cx="1126.3" cy="424.0" rx="1.1" ry="1.4" fill="#7e98c8"/>
<rect x="1130.8" y="425.6" width="4.0" height="3.5" fill="#1a2440"/>
<ellipse cx="1132.8" cy="424.6" rx="1.1" ry="1.4" fill="#a4b8dc"/>
<rect x="1136.1" y="425.1" width="4.0" height="3.5" fill="#121c34"/>
<ellipse cx="1138.1" cy="424.1" rx="1.1" ry="1.4" fill="#b8c8e6"/>
<rect x="1141.5" y="425.0" width="4.0" height="3.5" fill="#2e4270"/>
<ellipse cx="1143.5" cy="423.9" rx="1.1" ry="1.4" fill="#b8c8e6"/>
<rect x="1147.6" y="423.9" width="4.0" height="3.5" fill="#121c34"/>
<ellipse cx="1149.6" cy="422.9" rx="1.1" ry="1.4" fill="#b8c8e6"/>
<rect x="1153.7" y="426.0" width="4.0" height="3.5" fill="#26365c"/>
<ellipse cx="1155.7" cy="424.9" rx="1.1" ry="1.4" fill="#c6d2ec"/>
<rect x="1157.5" y="424.9" width="4.0" height="3.5" fill="#2e4270"/>
<ellipse cx="1159.5" cy="423.8" rx="1.1" ry="1.4" fill="#c6d2ec"/>
<rect x="1163.0" y="425.0" width="4.0" height="3.5" fill="#566ea0"/>
<ellipse cx="1165.0" cy="423.9" rx="1.1" ry="1.4" fill="#7e98c8"/>
<rect x="1168.6" y="424.3" width="4.0" height="3.5" fill="#566ea0"/>
<ellipse cx="1170.7" cy="423.2" rx="1.1" ry="1.4" fill="#b8c8e6"/>
<rect x="1173.0" y="425.8" width="4.0" height="3.5" fill="#121c34"/>
<ellipse cx="1175.0" cy="424.8" rx="1.1" ry="1.4" fill="#7e98c8"/>
<rect x="1179.5" y="426.0" width="4.0" height="3.5" fill="#26365c"/>
<ellipse cx="1181.5" cy="425.0" rx="1.1" ry="1.4" fill="#96acd6"/>
<rect x="1184.3" y="425.0" width="4.0" height="3.5" fill="#121c34"/>
<ellipse cx="1186.3" cy="424.0" rx="1.1" ry="1.4" fill="#b8c8e6"/>
<rect x="1188.8" y="425.8" width="4.0" height="3.5" fill="#2e4270"/>
<ellipse cx="1190.8" cy="424.7" rx="1.1" ry="1.4" fill="#a4b8dc"/>
<rect x="1194.1" y="425.7" width="4.0" height="3.5" fill="#3c5488"/>
<ellipse cx="1196.1" cy="424.7" rx="1.1" ry="1.4" fill="#a4b8dc"/>
<rect x="1200.4" y="426.2" width="4.0" height="3.5" fill="#1a2440"/>
<ellipse cx="1202.4" cy="425.2" rx="1.1" ry="1.4" fill="#7e98c8"/>
<rect x="1202.8" y="425.3" width="4.0" height="3.5" fill="#2e4270"/>
<ellipse cx="1204.8" cy="424.2" rx="1.1" ry="1.4" fill="#a4b8dc"/>
<rect x="1211.2" y="425.5" width="4.0" height="3.5" fill="#26365c"/>
<ellipse cx="1213.2" cy="424.5" rx="1.1" ry="1.4" fill="#7e98c8"/>
<rect x="1213.8" y="425.8" width="4.0" height="3.5" fill="#121c34"/>
<ellipse cx="1215.8" cy="424.7" rx="1.1" ry="1.4" fill="#a4b8dc"/>
<rect x="1219.4" y="425.4" width="4.0" height="3.5" fill="#3c5488"/>
<ellipse cx="1221.4" cy="424.4" rx="1.1" ry="1.4" fill="#a4b8dc"/>
<rect x="1223.7" y="425.6" width="4.0" height="3.5" fill="#26365c"/>
<ellipse cx="1225.7" cy="424.6" rx="1.1" ry="1.4" fill="#c6d2ec"/>
<rect x="1226.7" y="425.5" width="4.0" height="3.5" fill="#566ea0"/>
<ellipse cx="1228.7" cy="424.4" rx="1.1" ry="1.4" fill="#7e98c8"/>
<rect x="1233.0" y="426.0" width="4.0" height="3.5" fill="#2e4270"/>
<ellipse cx="1235.0" cy="425.0" rx="1.1" ry="1.4" fill="#96acd6"/>
<rect x="1237.7" y="425.5" width="4.0" height="3.5" fill="#121c34"/>
<ellipse cx="1239.7" cy="424.4" rx="1.1" ry="1.4" fill="#b8c8e6"/>
<rect x="1242.3" y="424.0" width="4.0" height="3.5" fill="#3c5488"/>
<ellipse cx="1244.3" cy="422.9" rx="1.1" ry="1.4" fill="#96acd6"/>
<rect x="1248.7" y="426.2" width="4.0" height="3.5" fill="#3c5488"/>
<ellipse cx="1250.7" cy="425.1" rx="1.1" ry="1.4" fill="#96acd6"/>
<rect x="1254.2" y="424.2" width="4.0" height="3.5" fill="#2e4270"/>
<ellipse cx="1256.2" cy="423.1" rx="1.1" ry="1.4" fill="#a4b8dc"/>
<rect x="1259.6" y="423.9" width="4.0" height="3.5" fill="#121c34"/>
<ellipse cx="1261.6" cy="422.9" rx="1.1" ry="1.4" fill="#a4b8dc"/>
<rect x="1112.4" y="428.3" width="4.4" height="3.9" fill="#1a2440"/>
<ellipse cx="1114.6" cy="427.1" rx="1.3" ry="1.6" fill="#c6d2ec"/>
<rect x="1118.0" y="429.6" width="4.4" height="3.9" fill="#2e4270"/>
<ellipse cx="1120.2" cy="428.4" rx="1.3" ry="1.6" fill="#7e98c8"/>
<rect x="1125.4" y="427.8" width="4.4" height="3.9" fill="#26365c"/>
<ellipse cx="1127.6" cy="426.6" rx="1.3" ry="1.6" fill="#7e98c8"/>
<rect x="1129.9" y="428.4" width="4.4" height="3.9" fill="#3c5488"/>
<ellipse cx="1132.1" cy="427.2" rx="1.3" ry="1.6" fill="#96acd6"/>
<rect x="1135.2" y="428.4" width="4.4" height="3.9" fill="#566ea0"/>
<ellipse cx="1137.4" cy="427.2" rx="1.3" ry="1.6" fill="#7e98c8"/>
<rect x="1140.6" y="429.1" width="4.4" height="3.9" fill="#3c5488"/>
<ellipse cx="1142.8" cy="427.9" rx="1.3" ry="1.6" fill="#7e98c8"/>
<rect x="1145.8" y="428.9" width="4.4" height="3.9" fill="#566ea0"/>
<ellipse cx="1148.0" cy="427.7" rx="1.3" ry="1.6" fill="#96acd6"/>
<rect x="1149.1" y="428.0" width="4.4" height="3.9" fill="#1a2440"/>
<ellipse cx="1151.4" cy="426.8" rx="1.3" ry="1.6" fill="#96acd6"/>
<rect x="1157.0" y="429.1" width="4.4" height="3.9" fill="#1a2440"/>
<ellipse cx="1159.2" cy="428.0" rx="1.3" ry="1.6" fill="#b8c8e6"/>
<rect x="1161.1" y="429.8" width="4.4" height="3.9" fill="#3c5488"/>
<ellipse cx="1163.3" cy="428.6" rx="1.3" ry="1.6" fill="#7e98c8"/>
<rect x="1166.2" y="427.9" width="4.4" height="3.9" fill="#1a2440"/>
<ellipse cx="1168.5" cy="426.7" rx="1.3" ry="1.6" fill="#96acd6"/>
<rect x="1172.4" y="429.7" width="4.4" height="3.9" fill="#121c34"/>
<ellipse cx="1174.6" cy="428.5" rx="1.3" ry="1.6" fill="#96acd6"/>
<rect x="1177.3" y="427.9" width="4.4" height="3.9" fill="#2e4270"/>
<ellipse cx="1179.5" cy="426.8" rx="1.3" ry="1.6" fill="#b8c8e6"/>
<rect x="1182.8" y="427.6" width="4.4" height="3.9" fill="#3c5488"/>
<ellipse cx="1185.1" cy="426.4" rx="1.3" ry="1.6" fill="#b8c8e6"/>
<rect x="1190.2" y="429.2" width="4.4" height="3.9" fill="#26365c"/>
<ellipse cx="1192.4" cy="428.0" rx="1.3" ry="1.6" fill="#7e98c8"/>
<rect x="1194.9" y="428.2" width="4.4" height="3.9" fill="#2e4270"/>
<ellipse cx="1197.2" cy="427.1" rx="1.3" ry="1.6" fill="#96acd6"/>
<rect x="1200.4" y="429.3" width="4.4" height="3.9" fill="#26365c"/>
<ellipse cx="1202.6" cy="428.1" rx="1.3" ry="1.6" fill="#c6d2ec"/>
<rect x="1207.9" y="429.7" width="4.4" height="3.9" fill="#2e4270"/>
<ellipse cx="1210.2" cy="428.6" rx="1.3" ry="1.6" fill="#b8c8e6"/>
<rect x="1212.9" y="428.2" width="4.4" height="3.9" fill="#26365c"/>
<ellipse cx="1215.1" cy="427.0" rx="1.3" ry="1.6" fill="#7e98c8"/>
<rect x="1218.6" y="428.1" width="4.4" height="3.9" fill="#2e4270"/>
<ellipse cx="1220.8" cy="426.9" rx="1.3" ry="1.6" fill="#a4b8dc"/>
<rect x="1225.9" y="428.2" width="4.4" height="3.9" fill="#1a2440"/>
<ellipse cx="1228.2" cy="427.0" rx="1.3" ry="1.6" fill="#7e98c8"/>
<rect x="1231.5" y="428.0" width="4.4" height="3.9" fill="#121c34"/>
<ellipse cx="1233.7" cy="426.8" rx="1.3" ry="1.6" fill="#a4b8dc"/>
<rect x="1238.4" y="428.9" width="4.4" height="3.9" fill="#2e4270"/>
<ellipse cx="1240.7" cy="427.7" rx="1.3" ry="1.6" fill="#a4b8dc"/>
<rect x="1243.3" y="428.7" width="4.4" height="3.9" fill="#1a2440"/>
<ellipse cx="1245.5" cy="427.5" rx="1.3" ry="1.6" fill="#7e98c8"/>
<rect x="1248.9" y="428.7" width="4.4" height="3.9" fill="#1a2440"/>
<ellipse cx="1251.1" cy="427.6" rx="1.3" ry="1.6" fill="#a4b8dc"/>
<rect x="1253.4" y="428.3" width="4.4" height="3.9" fill="#1a2440"/>
<ellipse cx="1255.7" cy="427.1" rx="1.3" ry="1.6" fill="#a4b8dc"/>
<rect x="1112.0" y="432.0" width="4.9" height="4.3" fill="#1a2440"/>
<ellipse cx="1114.4" cy="430.7" rx="1.4" ry="1.7" fill="#96acd6"/>
<rect x="1119.6" y="431.8" width="4.9" height="4.3" fill="#121c34"/>
<ellipse cx="1122.0" cy="430.5" rx="1.4" ry="1.7" fill="#96acd6"/>
<rect x="1124.5" y="433.1" width="4.9" height="4.3" fill="#121c34"/>
<ellipse cx="1127.0" cy="431.7" rx="1.4" ry="1.7" fill="#7e98c8"/>
<rect x="1129.6" y="433.4" width="4.9" height="4.3" fill="#2e4270"/>
<ellipse cx="1132.1" cy="432.1" rx="1.4" ry="1.7" fill="#c6d2ec"/>
<rect x="1133.9" y="433.4" width="4.9" height="4.3" fill="#26365c"/>
<ellipse cx="1136.3" cy="432.1" rx="1.4" ry="1.7" fill="#7e98c8"/>
<rect x="1140.5" y="432.7" width="4.9" height="4.3" fill="#566ea0"/>
<ellipse cx="1143.0" cy="431.4" rx="1.4" ry="1.7" fill="#b8c8e6"/>
<rect x="1146.2" y="431.8" width="4.9" height="4.3" fill="#2e4270"/>
<ellipse cx="1148.6" cy="430.4" rx="1.4" ry="1.7" fill="#96acd6"/>
<rect x="1152.0" y="432.9" width="4.9" height="4.3" fill="#3c5488"/>
<ellipse cx="1154.5" cy="431.6" rx="1.4" ry="1.7" fill="#96acd6"/>
<rect x="1157.8" y="431.7" width="4.9" height="4.3" fill="#3c5488"/>
<ellipse cx="1160.2" cy="430.4" rx="1.4" ry="1.7" fill="#96acd6"/>
<rect x="1165.3" y="431.7" width="4.9" height="4.3" fill="#566ea0"/>
<ellipse cx="1167.8" cy="430.4" rx="1.4" ry="1.7" fill="#b8c8e6"/>
<rect x="1171.3" y="433.7" width="4.9" height="4.3" fill="#121c34"/>
<ellipse cx="1173.8" cy="432.4" rx="1.4" ry="1.7" fill="#96acd6"/>
<rect x="1175.3" y="433.2" width="4.9" height="4.3" fill="#2e4270"/>
<ellipse cx="1177.8" cy="431.9" rx="1.4" ry="1.7" fill="#a4b8dc"/>
<rect x="1181.1" y="431.8" width="4.9" height="4.3" fill="#121c34"/>
<ellipse cx="1183.5" cy="430.5" rx="1.4" ry="1.7" fill="#7e98c8"/>
<rect x="1185.4" y="432.0" width="4.9" height="4.3" fill="#566ea0"/>
<ellipse cx="1187.9" cy="430.7" rx="1.4" ry="1.7" fill="#b8c8e6"/>
<rect x="1192.6" y="431.7" width="4.9" height="4.3" fill="#1a2440"/>
<ellipse cx="1195.0" cy="430.4" rx="1.4" ry="1.7" fill="#c6d2ec"/>
<rect x="1197.0" y="431.9" width="4.9" height="4.3" fill="#566ea0"/>
<ellipse cx="1199.5" cy="430.6" rx="1.4" ry="1.7" fill="#b8c8e6"/>
<rect x="1206.2" y="433.0" width="4.9" height="4.3" fill="#121c34"/>
<ellipse cx="1208.7" cy="431.7" rx="1.4" ry="1.7" fill="#96acd6"/>
<rect x="1210.8" y="432.4" width="4.9" height="4.3" fill="#26365c"/>
<ellipse cx="1213.3" cy="431.0" rx="1.4" ry="1.7" fill="#a4b8dc"/>
<rect x="1218.3" y="433.3" width="4.9" height="4.3" fill="#3c5488"/>
<ellipse cx="1220.8" cy="432.0" rx="1.4" ry="1.7" fill="#a4b8dc"/>
<rect x="1223.0" y="433.3" width="4.9" height="4.3" fill="#566ea0"/>
<ellipse cx="1225.5" cy="432.0" rx="1.4" ry="1.7" fill="#7e98c8"/>
<rect x="1229.8" y="432.3" width="4.9" height="4.3" fill="#566ea0"/>
<ellipse cx="1232.2" cy="431.0" rx="1.4" ry="1.7" fill="#96acd6"/>
<rect x="1236.3" y="431.7" width="4.9" height="4.3" fill="#121c34"/>
<ellipse cx="1238.8" cy="430.4" rx="1.4" ry="1.7" fill="#96acd6"/>
<rect x="1243.2" y="431.6" width="4.9" height="4.3" fill="#566ea0"/>
<ellipse cx="1245.7" cy="430.3" rx="1.4" ry="1.7" fill="#96acd6"/>
<rect x="1249.2" y="431.6" width="4.9" height="4.3" fill="#26365c"/>
<ellipse cx="1251.6" cy="430.3" rx="1.4" ry="1.7" fill="#c6d2ec"/>
<rect x="1256.9" y="432.5" width="4.9" height="4.3" fill="#26365c"/>
<ellipse cx="1259.4" cy="431.2" rx="1.4" ry="1.7" fill="#96acd6"/>
<rect x="1110.6" y="437.7" width="5.4" height="4.7" fill="#3c5488"/>
<ellipse cx="1113.3" cy="436.3" rx="1.5" ry="1.9" fill="#96acd6"/>
<rect x="1116.6" y="438.3" width="5.4" height="4.7" fill="#121c34"/>
<ellipse cx="1119.3" cy="436.9" rx="1.5" ry="1.9" fill="#a4b8dc"/>
<rect x="1123.5" y="436.3" width="5.4" height="4.7" fill="#566ea0"/>
<ellipse cx="1126.2" cy="434.8" rx="1.5" ry="1.9" fill="#96acd6"/>
<rect x="1129.2" y="436.9" width="5.4" height="4.7" fill="#26365c"/>
<ellipse cx="1131.9" cy="435.5" rx="1.5" ry="1.9" fill="#b8c8e6"/>
<rect x="1138.2" y="437.1" width="5.4" height="4.7" fill="#121c34"/>
<ellipse cx="1140.9" cy="435.6" rx="1.5" ry="1.9" fill="#7e98c8"/>
<rect x="1145.2" y="436.8" width="5.4" height="4.7" fill="#1a2440"/>
<ellipse cx="1147.9" cy="435.4" rx="1.5" ry="1.9" fill="#a4b8dc"/>
<rect x="1151.4" y="436.4" width="5.4" height="4.7" fill="#1a2440"/>
<ellipse cx="1154.1" cy="434.9" rx="1.5" ry="1.9" fill="#7e98c8"/>
<rect x="1156.2" y="436.7" width="5.4" height="4.7" fill="#121c34"/>
<ellipse cx="1158.9" cy="435.2" rx="1.5" ry="1.9" fill="#7e98c8"/>
<rect x="1164.4" y="436.9" width="5.4" height="4.7" fill="#2e4270"/>
<ellipse cx="1167.1" cy="435.5" rx="1.5" ry="1.9" fill="#c6d2ec"/>
<rect x="1169.6" y="436.3" width="5.4" height="4.7" fill="#3c5488"/>
<ellipse cx="1172.3" cy="434.8" rx="1.5" ry="1.9" fill="#7e98c8"/>
<rect x="1177.3" y="437.8" width="5.4" height="4.7" fill="#3c5488"/>
<ellipse cx="1180.0" cy="436.3" rx="1.5" ry="1.9" fill="#96acd6"/>
<rect x="1183.4" y="437.8" width="5.4" height="4.7" fill="#121c34"/>
<ellipse cx="1186.1" cy="436.4" rx="1.5" ry="1.9" fill="#c6d2ec"/>
<rect x="1193.2" y="436.9" width="5.4" height="4.7" fill="#3c5488"/>
<ellipse cx="1195.9" cy="435.5" rx="1.5" ry="1.9" fill="#a4b8dc"/>
<rect x="1199.2" y="436.0" width="5.4" height="4.7" fill="#2e4270"/>
<ellipse cx="1201.9" cy="434.6" rx="1.5" ry="1.9" fill="#a4b8dc"/>
<rect x="1207.1" y="436.8" width="5.4" height="4.7" fill="#121c34"/>
<ellipse cx="1209.8" cy="435.3" rx="1.5" ry="1.9" fill="#c6d2ec"/>
<rect x="1214.3" y="436.2" width="5.4" height="4.7" fill="#26365c"/>
<ellipse cx="1217.0" cy="434.7" rx="1.5" ry="1.9" fill="#a4b8dc"/>
<rect x="1221.3" y="437.0" width="5.4" height="4.7" fill="#2e4270"/>
<ellipse cx="1224.0" cy="435.5" rx="1.5" ry="1.9" fill="#a4b8dc"/>
<rect x="1226.2" y="437.5" width="5.4" height="4.7" fill="#2e4270"/>
<ellipse cx="1228.9" cy="436.1" rx="1.5" ry="1.9" fill="#96acd6"/>
<rect x="1233.6" y="436.2" width="5.4" height="4.7" fill="#2e4270"/>
<ellipse cx="1236.3" cy="434.8" rx="1.5" ry="1.9" fill="#c6d2ec"/>
<rect x="1240.7" y="438.1" width="5.4" height="4.7" fill="#3c5488"/>
<ellipse cx="1243.5" cy="436.6" rx="1.5" ry="1.9" fill="#96acd6"/>
<rect x="1246.6" y="437.4" width="5.4" height="4.7" fill="#1a2440"/>
<ellipse cx="1249.3" cy="436.0" rx="1.5" ry="1.9" fill="#96acd6"/>
<rect x="1254.8" y="436.5" width="5.4" height="4.7" fill="#121c34"/>
<ellipse cx="1257.5" cy="435.0" rx="1.5" ry="1.9" fill="#a4b8dc"/>
<rect x="1112.2" y="442.3" width="6.0" height="5.2" fill="#566ea0"/>
<ellipse cx="1115.2" cy="440.7" rx="1.7" ry="2.1" fill="#7e98c8"/>
<rect x="1119.8" y="442.0" width="6.0" height="5.2" fill="#1a2440"/>
<ellipse cx="1122.9" cy="440.4" rx="1.7" ry="2.1" fill="#b8c8e6"/>
<rect x="1127.5" y="441.8" width="6.0" height="5.2" fill="#26365c"/>
<ellipse cx="1130.5" cy="440.2" rx="1.7" ry="2.1" fill="#a4b8dc"/>
<rect x="1132.7" y="442.8" width="6.0" height="5.2" fill="#566ea0"/>
<ellipse cx="1135.7" cy="441.2" rx="1.7" ry="2.1" fill="#96acd6"/>
<rect x="1139.2" y="442.9" width="6.0" height="5.2" fill="#2e4270"/>
<ellipse cx="1142.2" cy="441.3" rx="1.7" ry="2.1" fill="#b8c8e6"/>
<rect x="1146.2" y="441.6" width="6.0" height="5.2" fill="#1a2440"/>
<ellipse cx="1149.2" cy="440.0" rx="1.7" ry="2.1" fill="#c6d2ec"/>
<rect x="1152.7" y="442.9" width="6.0" height="5.2" fill="#2e4270"/>
<ellipse cx="1155.7" cy="441.3" rx="1.7" ry="2.1" fill="#96acd6"/>
<rect x="1160.1" y="443.3" width="6.0" height="5.2" fill="#26365c"/>
<ellipse cx="1163.1" cy="441.7" rx="1.7" ry="2.1" fill="#a4b8dc"/>
<rect x="1166.0" y="442.1" width="6.0" height="5.2" fill="#121c34"/>
<ellipse cx="1169.1" cy="440.5" rx="1.7" ry="2.1" fill="#b8c8e6"/>
<rect x="1175.0" y="442.4" width="6.0" height="5.2" fill="#26365c"/>
<ellipse cx="1178.0" cy="440.8" rx="1.7" ry="2.1" fill="#b8c8e6"/>
<rect x="1183.6" y="443.6" width="6.0" height="5.2" fill="#3c5488"/>
<ellipse cx="1186.6" cy="442.0" rx="1.7" ry="2.1" fill="#a4b8dc"/>
<rect x="1187.7" y="441.8" width="6.0" height="5.2" fill="#26365c"/>
<ellipse cx="1190.7" cy="440.2" rx="1.7" ry="2.1" fill="#b8c8e6"/>
<rect x="1196.3" y="443.1" width="6.0" height="5.2" fill="#26365c"/>
<ellipse cx="1199.3" cy="441.5" rx="1.7" ry="2.1" fill="#a4b8dc"/>
<rect x="1202.9" y="442.2" width="6.0" height="5.2" fill="#121c34"/>
<ellipse cx="1205.9" cy="440.6" rx="1.7" ry="2.1" fill="#a4b8dc"/>
<rect x="1210.2" y="441.3" width="6.0" height="5.2" fill="#3c5488"/>
<ellipse cx="1213.3" cy="439.7" rx="1.7" ry="2.1" fill="#7e98c8"/>
<rect x="1218.4" y="443.1" width="6.0" height="5.2" fill="#1a2440"/>
<ellipse cx="1221.4" cy="441.5" rx="1.7" ry="2.1" fill="#b8c8e6"/>
<rect x="1225.6" y="442.2" width="6.0" height="5.2" fill="#3c5488"/>
<ellipse cx="1228.6" cy="440.6" rx="1.7" ry="2.1" fill="#96acd6"/>
<rect x="1232.1" y="442.5" width="6.0" height="5.2" fill="#121c34"/>
<ellipse cx="1235.1" cy="440.9" rx="1.7" ry="2.1" fill="#a4b8dc"/>
<rect x="1238.6" y="443.6" width="6.0" height="5.2" fill="#121c34"/>
<ellipse cx="1241.6" cy="442.0" rx="1.7" ry="2.1" fill="#a4b8dc"/>
<rect x="1245.1" y="443.7" width="6.0" height="5.2" fill="#2e4270"/>
<ellipse cx="1248.2" cy="442.1" rx="1.7" ry="2.1" fill="#b8c8e6"/>
<rect x="1252.7" y="443.6" width="6.0" height="5.2" fill="#566ea0"/>
<ellipse cx="1255.7" cy="442.0" rx="1.7" ry="2.1" fill="#c6d2ec"/>
<rect x="1112.1" y="447.2" width="6.7" height="5.8" fill="#3c5488"/>
<ellipse cx="1115.4" cy="445.4" rx="1.9" ry="2.3" fill="#7e98c8"/>
<rect x="1117.0" y="448.5" width="6.7" height="5.8" fill="#3c5488"/>
<ellipse cx="1120.3" cy="446.8" rx="1.9" ry="2.3" fill="#96acd6"/>
<rect x="1125.4" y="447.9" width="6.7" height="5.8" fill="#121c34"/>
<ellipse cx="1128.7" cy="446.2" rx="1.9" ry="2.3" fill="#7e98c8"/>
<rect x="1134.4" y="447.0" width="6.7" height="5.8" fill="#1a2440"/>
<ellipse cx="1137.7" cy="445.3" rx="1.9" ry="2.3" fill="#7e98c8"/>
<rect x="1139.9" y="447.2" width="6.7" height="5.8" fill="#121c34"/>
<ellipse cx="1143.2" cy="445.5" rx="1.9" ry="2.3" fill="#7e98c8"/>
<rect x="1146.6" y="448.4" width="6.7" height="5.8" fill="#566ea0"/>
<ellipse cx="1150.0" cy="446.7" rx="1.9" ry="2.3" fill="#c6d2ec"/>
<rect x="1157.2" y="448.2" width="6.7" height="5.8" fill="#2e4270"/>
<ellipse cx="1160.5" cy="446.4" rx="1.9" ry="2.3" fill="#c6d2ec"/>
<rect x="1163.4" y="447.6" width="6.7" height="5.8" fill="#566ea0"/>
<ellipse cx="1166.7" cy="445.8" rx="1.9" ry="2.3" fill="#7e98c8"/>
<rect x="1172.6" y="449.0" width="6.7" height="5.8" fill="#3c5488"/>
<ellipse cx="1175.9" cy="447.2" rx="1.9" ry="2.3" fill="#96acd6"/>
<rect x="1180.4" y="447.6" width="6.7" height="5.8" fill="#3c5488"/>
<ellipse cx="1183.7" cy="445.8" rx="1.9" ry="2.3" fill="#a4b8dc"/>
<rect x="1186.6" y="447.2" width="6.7" height="5.8" fill="#3c5488"/>
<ellipse cx="1189.9" cy="445.5" rx="1.9" ry="2.3" fill="#7e98c8"/>
<rect x="1194.4" y="446.9" width="6.7" height="5.8" fill="#566ea0"/>
<ellipse cx="1197.7" cy="445.1" rx="1.9" ry="2.3" fill="#96acd6"/>
<rect x="1201.1" y="446.7" width="6.7" height="5.8" fill="#26365c"/>
<ellipse cx="1204.4" cy="444.9" rx="1.9" ry="2.3" fill="#7e98c8"/>
<rect x="1206.5" y="448.6" width="6.7" height="5.8" fill="#121c34"/>
<ellipse cx="1209.8" cy="446.8" rx="1.9" ry="2.3" fill="#b8c8e6"/>
<rect x="1215.2" y="446.8" width="6.7" height="5.8" fill="#121c34"/>
<ellipse cx="1218.5" cy="445.0" rx="1.9" ry="2.3" fill="#b8c8e6"/>
<rect x="1221.1" y="447.6" width="6.7" height="5.8" fill="#26365c"/>
<ellipse cx="1224.4" cy="445.8" rx="1.9" ry="2.3" fill="#b8c8e6"/>
<rect x="1229.9" y="448.4" width="6.7" height="5.8" fill="#3c5488"/>
<ellipse cx="1233.2" cy="446.7" rx="1.9" ry="2.3" fill="#96acd6"/>
<rect x="1239.1" y="448.3" width="6.7" height="5.8" fill="#3c5488"/>
<ellipse cx="1242.5" cy="446.5" rx="1.9" ry="2.3" fill="#a4b8dc"/>
<rect x="1245.1" y="447.5" width="6.7" height="5.8" fill="#566ea0"/>
<ellipse cx="1248.5" cy="445.7" rx="1.9" ry="2.3" fill="#b8c8e6"/>
<rect x="1252.5" y="448.7" width="6.7" height="5.8" fill="#26365c"/>
<ellipse cx="1255.8" cy="446.9" rx="1.9" ry="2.3" fill="#c6d2ec"/>
<rect x="1109.6" y="453.8" width="7.4" height="6.4" fill="#1a2440"/>
<ellipse cx="1113.3" cy="451.9" rx="2.1" ry="2.6" fill="#a4b8dc"/>
<rect x="1117.0" y="453.2" width="7.4" height="6.4" fill="#26365c"/>
<ellipse cx="1120.7" cy="451.3" rx="2.1" ry="2.6" fill="#c6d2ec"/>
<rect x="1125.7" y="453.9" width="7.4" height="6.4" fill="#2e4270"/>
<ellipse cx="1129.4" cy="451.9" rx="2.1" ry="2.6" fill="#a4b8dc"/>
<rect x="1134.5" y="452.7" width="7.4" height="6.4" fill="#566ea0"/>
<ellipse cx="1138.2" cy="450.8" rx="2.1" ry="2.6" fill="#b8c8e6"/>
<rect x="1143.5" y="454.9" width="7.4" height="6.4" fill="#121c34"/>
<ellipse cx="1147.2" cy="452.9" rx="2.1" ry="2.6" fill="#b8c8e6"/>
<rect x="1152.1" y="454.9" width="7.4" height="6.4" fill="#566ea0"/>
<ellipse cx="1155.8" cy="452.9" rx="2.1" ry="2.6" fill="#7e98c8"/>
<rect x="1158.7" y="454.9" width="7.4" height="6.4" fill="#2e4270"/>
<ellipse cx="1162.4" cy="452.9" rx="2.1" ry="2.6" fill="#a4b8dc"/>
<rect x="1168.3" y="453.9" width="7.4" height="6.4" fill="#1a2440"/>
<ellipse cx="1172.0" cy="452.0" rx="2.1" ry="2.6" fill="#7e98c8"/>
<rect x="1176.7" y="454.0" width="7.4" height="6.4" fill="#26365c"/>
<ellipse cx="1180.4" cy="452.0" rx="2.1" ry="2.6" fill="#7e98c8"/>
<rect x="1184.4" y="452.7" width="7.4" height="6.4" fill="#26365c"/>
<ellipse cx="1188.1" cy="450.7" rx="2.1" ry="2.6" fill="#c6d2ec"/>
<rect x="1192.9" y="454.4" width="7.4" height="6.4" fill="#3c5488"/>
<ellipse cx="1196.6" cy="452.5" rx="2.1" ry="2.6" fill="#a4b8dc"/>
<rect x="1203.0" y="453.5" width="7.4" height="6.4" fill="#566ea0"/>
<ellipse cx="1206.7" cy="451.5" rx="2.1" ry="2.6" fill="#b8c8e6"/>
<rect x="1213.0" y="453.3" width="7.4" height="6.4" fill="#2e4270"/>
<ellipse cx="1216.7" cy="451.3" rx="2.1" ry="2.6" fill="#a4b8dc"/>
<rect x="1219.4" y="454.6" width="7.4" height="6.4" fill="#121c34"/>
<ellipse cx="1223.1" cy="452.6" rx="2.1" ry="2.6" fill="#b8c8e6"/>
<rect x="1229.4" y="454.8" width="7.4" height="6.4" fill="#121c34"/>
<ellipse cx="1233.1" cy="452.9" rx="2.1" ry="2.6" fill="#96acd6"/>
<rect x="1235.9" y="454.4" width="7.4" height="6.4" fill="#1a2440"/>
<ellipse cx="1239.6" cy="452.5" rx="2.1" ry="2.6" fill="#c6d2ec"/>
<rect x="1243.1" y="454.6" width="7.4" height="6.4" fill="#2e4270"/>
<ellipse cx="1246.7" cy="452.7" rx="2.1" ry="2.6" fill="#7e98c8"/>
<rect x="1252.4" y="454.1" width="7.4" height="6.4" fill="#566ea0"/>
<ellipse cx="1256.0" cy="452.1" rx="2.1" ry="2.6" fill="#a4b8dc"/>
<rect x="1109.1" y="461.6" width="8.1" height="7.1" fill="#2e4270"/>
<ellipse cx="1113.2" cy="459.5" rx="2.3" ry="2.9" fill="#a4b8dc"/>
<rect x="1118.2" y="459.6" width="8.1" height="7.1" fill="#2e4270"/>
<ellipse cx="1122.3" cy="457.4" rx="2.3" ry="2.9" fill="#a4b8dc"/>
<rect x="1127.1" y="461.5" width="8.1" height="7.1" fill="#2e4270"/>
<ellipse cx="1131.2" cy="459.3" rx="2.3" ry="2.9" fill="#a4b8dc"/>
<rect x="1135.7" y="460.3" width="8.1" height="7.1" fill="#3c5488"/>
<ellipse cx="1139.8" cy="458.2" rx="2.3" ry="2.9" fill="#b8c8e6"/>
<rect x="1144.8" y="461.5" width="8.1" height="7.1" fill="#121c34"/>
<ellipse cx="1148.8" cy="459.3" rx="2.3" ry="2.9" fill="#b8c8e6"/>
<rect x="1154.7" y="460.3" width="8.1" height="7.1" fill="#3c5488"/>
<ellipse cx="1158.8" cy="458.1" rx="2.3" ry="2.9" fill="#96acd6"/>
<rect x="1163.6" y="460.5" width="8.1" height="7.1" fill="#3c5488"/>
<ellipse cx="1167.7" cy="458.3" rx="2.3" ry="2.9" fill="#96acd6"/>
<rect x="1174.0" y="460.4" width="8.1" height="7.1" fill="#2e4270"/>
<ellipse cx="1178.1" cy="458.2" rx="2.3" ry="2.9" fill="#c6d2ec"/>
<rect x="1181.7" y="461.6" width="8.1" height="7.1" fill="#2e4270"/>
<ellipse cx="1185.8" cy="459.4" rx="2.3" ry="2.9" fill="#96acd6"/>
<rect x="1192.6" y="460.2" width="8.1" height="7.1" fill="#26365c"/>
<ellipse cx="1196.7" cy="458.0" rx="2.3" ry="2.9" fill="#a4b8dc"/>
<rect x="1200.6" y="460.6" width="8.1" height="7.1" fill="#121c34"/>
<ellipse cx="1204.7" cy="458.4" rx="2.3" ry="2.9" fill="#96acd6"/>
<rect x="1208.1" y="460.7" width="8.1" height="7.1" fill="#3c5488"/>
<ellipse cx="1212.2" cy="458.5" rx="2.3" ry="2.9" fill="#b8c8e6"/>
<rect x="1216.5" y="460.0" width="8.1" height="7.1" fill="#121c34"/>
<ellipse cx="1220.6" cy="457.8" rx="2.3" ry="2.9" fill="#b8c8e6"/>
<rect x="1226.3" y="460.9" width="8.1" height="7.1" fill="#2e4270"/>
<ellipse cx="1230.4" cy="458.7" rx="2.3" ry="2.9" fill="#a4b8dc"/>
<rect x="1235.3" y="459.6" width="8.1" height="7.1" fill="#121c34"/>
<ellipse cx="1239.4" cy="457.4" rx="2.3" ry="2.9" fill="#b8c8e6"/>
<rect x="1244.7" y="460.7" width="8.1" height="7.1" fill="#2e4270"/>
<ellipse cx="1248.7" cy="458.5" rx="2.3" ry="2.9" fill="#96acd6"/>
<rect x="1253.3" y="459.6" width="8.1" height="7.1" fill="#1a2440"/>
<ellipse cx="1257.4" cy="457.4" rx="2.3" ry="2.9" fill="#b8c8e6"/>
<rect x="1109.7" y="467.4" width="9.0" height="7.8" fill="#3c5488"/>
<ellipse cx="1114.2" cy="465.0" rx="2.5" ry="3.1" fill="#a4b8dc"/>
<rect x="1116.2" y="466.6" width="9.0" height="7.8" fill="#566ea0"/>
<ellipse cx="1120.6" cy="464.2" rx="2.5" ry="3.1" fill="#c6d2ec"/>
<rect x="1125.9" y="466.9" width="9.0" height="7.8" fill="#121c34"/>
<ellipse cx="1130.4" cy="464.6" rx="2.5" ry="3.1" fill="#a4b8dc"/>
<rect x="1136.4" y="468.0" width="9.0" height="7.8" fill="#3c5488"/>
<ellipse cx="1140.9" cy="465.6" rx="2.5" ry="3.1" fill="#b8c8e6"/>
<rect x="1146.9" y="466.6" width="9.0" height="7.8" fill="#1a2440"/>
<ellipse cx="1151.4" cy="464.3" rx="2.5" ry="3.1" fill="#96acd6"/>
<rect x="1156.1" y="468.0" width="9.0" height="7.8" fill="#566ea0"/>
<ellipse cx="1160.6" cy="465.6" rx="2.5" ry="3.1" fill="#c6d2ec"/>
<rect x="1166.2" y="467.7" width="9.0" height="7.8" fill="#1a2440"/>
<ellipse cx="1170.7" cy="465.3" rx="2.5" ry="3.1" fill="#7e98c8"/>
<rect x="1175.8" y="468.6" width="9.0" height="7.8" fill="#2e4270"/>
<ellipse cx="1180.3" cy="466.2" rx="2.5" ry="3.1" fill="#7e98c8"/>
<rect x="1187.0" y="467.2" width="9.0" height="7.8" fill="#1a2440"/>
<ellipse cx="1191.5" cy="464.8" rx="2.5" ry="3.1" fill="#c6d2ec"/>
<rect x="1193.8" y="468.7" width="9.0" height="7.8" fill="#3c5488"/>
<ellipse cx="1198.3" cy="466.3" rx="2.5" ry="3.1" fill="#7e98c8"/>
<rect x="1205.6" y="467.8" width="9.0" height="7.8" fill="#3c5488"/>
<ellipse cx="1210.0" cy="465.4" rx="2.5" ry="3.1" fill="#c6d2ec"/>
<rect x="1214.4" y="467.0" width="9.0" height="7.8" fill="#566ea0"/>
<ellipse cx="1218.9" cy="464.6" rx="2.5" ry="3.1" fill="#7e98c8"/>
<rect x="1224.6" y="466.7" width="9.0" height="7.8" fill="#566ea0"/>
<ellipse cx="1229.0" cy="464.3" rx="2.5" ry="3.1" fill="#96acd6"/>
<rect x="1235.2" y="466.6" width="9.0" height="7.8" fill="#26365c"/>
<ellipse cx="1239.6" cy="464.3" rx="2.5" ry="3.1" fill="#96acd6"/>
<rect x="1244.1" y="468.1" width="9.0" height="7.8" fill="#121c34"/>
<ellipse cx="1248.6" cy="465.7" rx="2.5" ry="3.1" fill="#b8c8e6"/>
<rect x="1254.0" y="468.3" width="9.0" height="7.8" fill="#1a2440"/>
<ellipse cx="1258.4" cy="465.9" rx="2.5" ry="3.1" fill="#7e98c8"/>
<rect x="1109.4" y="475.9" width="9.9" height="8.6" fill="#1a2440"/>
<ellipse cx="1114.4" cy="473.3" rx="2.8" ry="3.5" fill="#c6d2ec"/>
<rect x="1117.7" y="476.0" width="9.9" height="8.6" fill="#2e4270"/>
<ellipse cx="1122.7" cy="473.4" rx="2.8" ry="3.5" fill="#7e98c8"/>
<rect x="1131.3" y="475.9" width="9.9" height="8.6" fill="#3c5488"/>
<ellipse cx="1136.3" cy="473.2" rx="2.8" ry="3.5" fill="#c6d2ec"/>
<rect x="1140.3" y="475.3" width="9.9" height="8.6" fill="#566ea0"/>
<ellipse cx="1145.2" cy="472.7" rx="2.8" ry="3.5" fill="#c6d2ec"/>
<rect x="1151.2" y="476.5" width="9.9" height="8.6" fill="#2e4270"/>
<ellipse cx="1156.2" cy="473.8" rx="2.8" ry="3.5" fill="#b8c8e6"/>
<rect x="1162.5" y="474.7" width="9.9" height="8.6" fill="#26365c"/>
<ellipse cx="1167.5" cy="472.1" rx="2.8" ry="3.5" fill="#7e98c8"/>
<rect x="1172.5" y="476.2" width="9.9" height="8.6" fill="#121c34"/>
<ellipse cx="1177.4" cy="473.6" rx="2.8" ry="3.5" fill="#7e98c8"/>
<rect x="1182.4" y="476.4" width="9.9" height="8.6" fill="#3c5488"/>
<ellipse cx="1187.3" cy="473.7" rx="2.8" ry="3.5" fill="#c6d2ec"/>
<rect x="1194.2" y="476.5" width="9.9" height="8.6" fill="#121c34"/>
<ellipse cx="1199.2" cy="473.9" rx="2.8" ry="3.5" fill="#96acd6"/>
<rect x="1203.4" y="476.5" width="9.9" height="8.6" fill="#3c5488"/>
<ellipse cx="1208.4" cy="473.9" rx="2.8" ry="3.5" fill="#7e98c8"/>
<rect x="1214.3" y="475.8" width="9.9" height="8.6" fill="#2e4270"/>
<ellipse cx="1219.2" cy="473.1" rx="2.8" ry="3.5" fill="#a4b8dc"/>
<rect x="1225.2" y="476.7" width="9.9" height="8.6" fill="#2e4270"/>
<ellipse cx="1230.2" cy="474.0" rx="2.8" ry="3.5" fill="#96acd6"/>
<rect x="1236.0" y="475.5" width="9.9" height="8.6" fill="#2e4270"/>
<ellipse cx="1240.9" cy="472.9" rx="2.8" ry="3.5" fill="#96acd6"/>
<rect x="1244.5" y="476.2" width="9.9" height="8.6" fill="#1a2440"/>
<ellipse cx="1249.5" cy="473.6" rx="2.8" ry="3.5" fill="#c6d2ec"/>
<rect x="1257.0" y="475.7" width="9.9" height="8.6" fill="#26365c"/>
<ellipse cx="1262.0" cy="473.0" rx="2.8" ry="3.5" fill="#b8c8e6"/>
<rect x="1109.0" y="484.2" width="10.9" height="9.5" fill="#3c5488"/>
<ellipse cx="1114.4" cy="481.3" rx="3.1" ry="3.8" fill="#a4b8dc"/>
<rect x="1118.8" y="484.2" width="10.9" height="9.5" fill="#1a2440"/>
<ellipse cx="1124.2" cy="481.2" rx="3.1" ry="3.8" fill="#7e98c8"/>
<rect x="1130.0" y="483.5" width="10.9" height="9.5" fill="#566ea0"/>
<ellipse cx="1135.5" cy="480.6" rx="3.1" ry="3.8" fill="#7e98c8"/>
<rect x="1142.3" y="483.2" width="10.9" height="9.5" fill="#121c34"/>
<ellipse cx="1147.8" cy="480.3" rx="3.1" ry="3.8" fill="#c6d2ec"/>
<rect x="1154.1" y="484.6" width="10.9" height="9.5" fill="#26365c"/>
<ellipse cx="1159.5" cy="481.7" rx="3.1" ry="3.8" fill="#c6d2ec"/>
<rect x="1165.1" y="485.5" width="10.9" height="9.5" fill="#1a2440"/>
<ellipse cx="1170.5" cy="482.6" rx="3.1" ry="3.8" fill="#96acd6"/>
<rect x="1175.5" y="484.4" width="10.9" height="9.5" fill="#26365c"/>
<ellipse cx="1180.9" cy="481.5" rx="3.1" ry="3.8" fill="#a4b8dc"/>
<rect x="1185.9" y="484.2" width="10.9" height="9.5" fill="#26365c"/>
<ellipse cx="1191.3" cy="481.2" rx="3.1" ry="3.8" fill="#b8c8e6"/>
<rect x="1198.9" y="483.5" width="10.9" height="9.5" fill="#566ea0"/>
<ellipse cx="1204.4" cy="480.6" rx="3.1" ry="3.8" fill="#a4b8dc"/>
<rect x="1210.6" y="484.1" width="10.9" height="9.5" fill="#26365c"/>
<ellipse cx="1216.0" cy="481.2" rx="3.1" ry="3.8" fill="#7e98c8"/>
<rect x="1221.5" y="484.2" width="10.9" height="9.5" fill="#2e4270"/>
<ellipse cx="1226.9" cy="481.3" rx="3.1" ry="3.8" fill="#96acd6"/>
<rect x="1235.4" y="483.8" width="10.9" height="9.5" fill="#26365c"/>
<ellipse cx="1240.9" cy="480.9" rx="3.1" ry="3.8" fill="#a4b8dc"/>
<rect x="1247.9" y="484.1" width="10.9" height="9.5" fill="#2e4270"/>
<ellipse cx="1253.4" cy="481.2" rx="3.1" ry="3.8" fill="#c6d2ec"/>
<rect x="1106.8" y="494.5" width="12.0" height="10.4" fill="#26365c"/>
<ellipse cx="1112.8" cy="491.3" rx="3.4" ry="4.2" fill="#a4b8dc"/>
<rect x="1121.1" y="493.1" width="12.0" height="10.4" fill="#2e4270"/>
<ellipse cx="1127.1" cy="489.9" rx="3.4" ry="4.2" fill="#a4b8dc"/>
<rect x="1132.5" y="493.1" width="12.0" height="10.4" fill="#26365c"/>
<ellipse cx="1138.5" cy="489.9" rx="3.4" ry="4.2" fill="#b8c8e6"/>
<rect x="1143.3" y="493.8" width="12.0" height="10.4" fill="#2e4270"/>
<ellipse cx="1149.3" cy="490.6" rx="3.4" ry="4.2" fill="#a4b8dc"/>
<rect x="1155.6" y="495.0" width="12.0" height="10.4" fill="#2e4270"/>
<ellipse cx="1161.6" cy="491.8" rx="3.4" ry="4.2" fill="#b8c8e6"/>
<rect x="1168.1" y="493.1" width="12.0" height="10.4" fill="#1a2440"/>
<ellipse cx="1174.1" cy="489.9" rx="3.4" ry="4.2" fill="#a4b8dc"/>
<rect x="1182.0" y="494.9" width="12.0" height="10.4" fill="#121c34"/>
<ellipse cx="1188.0" cy="491.7" rx="3.4" ry="4.2" fill="#b8c8e6"/>
<rect x="1195.7" y="494.2" width="12.0" height="10.4" fill="#566ea0"/>
<ellipse cx="1201.7" cy="491.0" rx="3.4" ry="4.2" fill="#c6d2ec"/>
<rect x="1206.3" y="493.8" width="12.0" height="10.4" fill="#26365c"/>
<ellipse cx="1212.3" cy="490.6" rx="3.4" ry="4.2" fill="#a4b8dc"/>
<rect x="1218.1" y="494.0" width="12.0" height="10.4" fill="#566ea0"/>
<ellipse cx="1224.1" cy="490.8" rx="3.4" ry="4.2" fill="#c6d2ec"/>
<rect x="1231.3" y="494.2" width="12.0" height="10.4" fill="#1a2440"/>
<ellipse cx="1237.3" cy="491.0" rx="3.4" ry="4.2" fill="#a4b8dc"/>
<rect x="1243.8" y="493.5" width="12.0" height="10.4" fill="#3c5488"/>
<ellipse cx="1249.8" cy="490.3" rx="3.4" ry="4.2" fill="#a4b8dc"/>
<rect x="1109.1" y="505.1" width="13.3" height="11.5" fill="#1a2440"/>
<ellipse cx="1115.7" cy="501.6" rx="3.8" ry="4.6" fill="#a4b8dc"/>
<rect x="1122.7" y="503.8" width="13.3" height="11.5" fill="#26365c"/>
<ellipse cx="1129.3" cy="500.3" rx="3.8" ry="4.6" fill="#b8c8e6"/>
<rect x="1135.6" y="504.7" width="13.3" height="11.5" fill="#26365c"/>
<ellipse cx="1142.2" cy="501.1" rx="3.8" ry="4.6" fill="#c6d2ec"/>
<rect x="1150.7" y="504.7" width="13.3" height="11.5" fill="#566ea0"/>
<ellipse cx="1157.3" cy="501.2" rx="3.8" ry="4.6" fill="#a4b8dc"/>
<rect x="1162.1" y="504.1" width="13.3" height="11.5" fill="#1a2440"/>
<ellipse cx="1168.7" cy="500.6" rx="3.8" ry="4.6" fill="#7e98c8"/>
<rect x="1178.9" y="504.2" width="13.3" height="11.5" fill="#566ea0"/>
<ellipse cx="1185.5" cy="500.6" rx="3.8" ry="4.6" fill="#a4b8dc"/>
<rect x="1192.0" y="504.5" width="13.3" height="11.5" fill="#2e4270"/>
<ellipse cx="1198.6" cy="501.0" rx="3.8" ry="4.6" fill="#a4b8dc"/>
<rect x="1206.6" y="505.5" width="13.3" height="11.5" fill="#26365c"/>
<ellipse cx="1213.2" cy="502.0" rx="3.8" ry="4.6" fill="#c6d2ec"/>
<rect x="1220.3" y="504.4" width="13.3" height="11.5" fill="#121c34"/>
<ellipse cx="1226.9" cy="500.9" rx="3.8" ry="4.6" fill="#c6d2ec"/>
<rect x="1234.0" y="505.3" width="13.3" height="11.5" fill="#566ea0"/>
<ellipse cx="1240.7" cy="501.8" rx="3.8" ry="4.6" fill="#c6d2ec"/>
<rect x="1246.8" y="505.1" width="13.3" height="11.5" fill="#1a2440"/>
<ellipse cx="1253.4" cy="501.5" rx="3.8" ry="4.6" fill="#7e98c8"/>
</g>
<g filter="url(#b05)">
<rect x="1112" y="384" width="150" height="32" fill="#2a344e"/>
<rect x="1112" y="384" width="150" height="6" fill="#3a4a6a"/>
<polygon points="1210,390 1262,398 1262,430 1210,424" fill="#6a86b0"/>
<rect x="1225" y="392" width="1" height="34" fill="#5a76a0"/><rect x="1238" y="394" width="1" height="34" fill="#5a76a0"/>
<rect x="1134" y="398" width="76" height="14" fill="#0c0f16"/>
<rect x="1190" y="403" width="17" height="10" fill="#d8dec0"/>
<rect x="1112" y="486" width="150" height="20" fill="#101a30" opacity="0.45"/>
<rect x="1134" y="459" width="10" height="11" fill="#e06686"/>
</g>
</g>

<!-- PHOTO 6: cleaning -->
<g clip-path="url(#c6)">
<rect x="718" y="460" width="150" height="125" fill="#4a3a2a"/>
<g filter="url(#b1)">
<rect x="761" y="483" width="26" height="70" fill="#946c3c"/>
<rect x="761" y="500" width="26" height="1.5" fill="#5a4020"/><rect x="761" y="520" width="26" height="1.5" fill="#5a4020"/>
<polygon points="770,462 840,460 838,471 792,472 792,485 772,485" fill="#e4e4e4"/>
<polygon points="788,470 841,470 845,545 795,548" fill="url(#apron)"/>
<polygon points="837.5,477 868,480 868,505 840,497" fill="#eeeeee"/>
<polygon points="779,483 792,483 801,534 790,537" fill="#7a4a34"/>
<ellipse cx="747" cy="492" rx="15" ry="15" fill="#e2303a"/>
<polygon points="718,514 775.6,512 775.6,563 721,566" fill="#f0f0f2"/>
<rect x="735" y="535" width="3" height="26" fill="#c4c4c8"/>
<rect x="752" y="540" width="2.5" height="22" fill="#c4c4c8"/>
<polygon points="748,512 766,508 771,532 748,535" fill="#8cbce2"/>
<rect x="752" y="499" width="12" height="12" fill="#e6e040"/>
<polygon points="772,544.8 868,540 868,585 772,585" fill="url(#speck)"/>
<polygon points="718,563 772,560 772,585 718,585" fill="#4c4c4c"/>
<polygon points="812,496 850,490 866,495 866,523 840,525 816,516" fill="#f4d420"/>
<polygon points="810,497 826,497 826,511 810,511" fill="#f4f4f4"/>
<polygon points="832,521 862,517 865,546 838,550" fill="#92cc40"/>
<polygon points="767,558 802,554 804,572 770,578" fill="#b898d4"/>
<polygon points="786,530 800,532 806,545 800,562 790,572 774,574 780,555" fill="#f0d020"/>
</g>
</g>

<!-- PHOTO 7: salad -->
<g clip-path="url(#c7)">
<rect x="1100" y="560" width="152" height="105" fill="#dcae88"/>
<g filter="url(#b1)">
<rect x="1100" y="560" width="40" height="105" fill="#e6c4a4"/>
<rect x="1205" y="600" width="50" height="65" fill="#e8c8aa"/>
<polygon points="1113.7,585 1130,571 1147.8,575 1147.8,622.9 1120,622" fill="#f0d4c8"/>
<polygon points="1176.5,571 1209,566.8 1213.5,600 1213.5,624 1190,624" fill="#f2d6ca"/>
<polygon points="1180,566 1209,566.8 1212,584.6 1195,584" fill="#b0a8a8"/>
<rect x="1214.8" y="582" width="16" height="8" fill="#f08030"/>
<rect x="1214.8" y="594" width="16" height="12.5" fill="#d0a040"/>
<rect x="1234" y="594" width="12" height="14" fill="#a8c880"/>
<ellipse cx="1228.5" cy="628.3" rx="17.8" ry="16.4" fill="#f0e4e0"/>
<ellipse cx="1230" cy="630" rx="13" ry="12" fill="#c42222"/>
<ellipse cx="1183" cy="654" rx="20" ry="7" fill="#c8d848"/>
<rect x="1161.5" y="565.5" width="15" height="9.5" fill="#b0d0a0"/>
</g>
<ellipse cx="1164.2" cy="616" rx="42.4" ry="34.2" fill="#b89a80" stroke="#9a9088" stroke-width="2"/>
<g filter="url(#b05)">
<ellipse cx="1162.9" cy="616" rx="38" ry="28.7" fill="#5e8a38"/>
<ellipse cx="1172" cy="598" rx="16" ry="7" fill="#b82050"/>
<ellipse cx="1160" cy="640" rx="18" ry="5" fill="#7a2034"/>
<ellipse cx="1185" cy="642" rx="10" ry="5" fill="#6a1c2c"/>
<polygon points="1127,612 1140,606 1146,636 1134,640" fill="#c8d870"/>
<polygon points="1185,595 1198,600 1200,612 1188,610" fill="#c0d8a0"/>
<circle cx="1153.3" cy="632.4" r="8" fill="#e23a22"/>
<circle cx="1180.6" cy="614.7" r="7.5" fill="#e5401e"/>
<circle cx="1184.7" cy="630.3" r="6.5" fill="#c83020"/>
<polygon points="1150.6,592 1171,588.7 1171,598.3 1152,598" fill="#f0c020"/>
<polygon points="1187.5,617.4 1201,620 1197,633 1186,630" fill="#f4c030"/>
<polygon points="1139.6,598 1145,597 1153.3,617.4 1148,618" fill="#e02020"/>
<ellipse cx="1162.9" cy="607.8" rx="10" ry="6.8" fill="none" stroke="#f8f8f8" stroke-width="2.2"/>
<ellipse cx="1162.2" cy="622.2" rx="9" ry="5.8" fill="none" stroke="#f6f6f6" stroke-width="2.2"/>
</g>
</g>

<!-- PHOTO 8: forest -->
<g clip-path="url(#c8)">
<rect x="720" y="688" width="155" height="45" fill="#98a456"/>
<rect x="720" y="688" width="155" height="45" filter="url(#nz2)" opacity="0.3"/>
<ellipse cx="760" cy="712" rx="22" ry="14" fill="#c4c878" opacity="0.6"/><ellipse cx="840" cy="712" rx="18" ry="12" fill="#b8c070" opacity="0.5"/>
<g filter="url(#b05)">
<rect x="788" y="690" width="8" height="40" fill="#3a3424" opacity="0.9"/>
<rect x="803" y="690" width="7" height="40" fill="#4a4232" opacity="0.9"/>
<rect x="815" y="692" width="5" height="40" fill="#5c5840" opacity="0.8"/>
<rect x="770" y="698" width="3" height="35" fill="#4a4030" opacity="0.7"/>
<rect x="745" y="705" width="6" height="30" fill="#403420" opacity="0.8"/>
<rect x="840" y="700" width="4" height="30" fill="#4a4a30" opacity="0.7"/>
<circle cx="776" cy="726" r="4" fill="#e8d8d0"/>
<circle cx="804" cy="725" r="4" fill="#e0d0c8"/>
</g>
</g>
</svg>
<!--/PHOTOS-->
<!--TEXT-->
<div class="t tl" style="left:316.2px;top:194.1px;transform:scaleX(1.0034)">Самым эффективным способом</div>
<div class="t tl" style="left:318.2px;top:214.5px;transform:scaleX(1.0128)">профилактики ГРИППа и его тяжелых</div>
<div class="t tl" style="left:320.0px;top:232.7px;transform:scaleX(0.9876)">последствий является ВАКЦИНАЦИЯ!</div>
<div class="t tl" style="left:322.4px;top:251.7px;transform:scaleX(1.0053)">Вакцинация особенно необходима лицам</div>
<div class="t tl" style="left:324.6px;top:269.8px;transform:scaleX(0.9954)">из группы риска:</div>
<div class="t tl" style="left:400.4px;top:290.0px;transform:scaleX(1.0192)">беременным;</div>
<div class="t tl" style="left:422.8px;top:311.5px;transform:scaleX(0.9909)">детям с 6-ти месяцев;</div>
<div class="t tl" style="left:410.5px;top:332.7px;transform:scaleX(1.0313)">пожилым людям;</div>
<div class="t tl" style="left:274.6px;top:355.0px;transform:scaleX(1.0052)">лицам со слабым иммунитетом или</div>
<div class="t tl" style="left:175.6px;top:376.5px;transform:scaleX(1.0183)">хроническими заболеваниями;</div>
<div class="t tl" style="left:175.6px;top:399.4px;transform:scaleX(1.0028)">людям с заболеваниями сердца, сосудов, дыхательной</div>
<div class="t tl" style="left:175.6px;top:420.5px;transform:scaleX(0.9973)">системы;</div>
<div class="t tl" style="left:175.6px;top:443.0px;transform:scaleX(1.0098)">лицам из групп профессионального риска (медработникам,</div>
<div class="t tl" style="left:175.6px;top:464.4px;transform:scaleX(1.0051)">учителям, студентам, работникам сферы обслуживания и</div>
<div class="t tl" style="left:175.6px;top:486.2px;transform:scaleX(1.0081)">транспорта).</div>
<div class="t" style="left:289.4px;top:527.2px;width:364.8px"><b>Вакцинопрофилактика</b> проводится за 2-3</div>
<div class="t" style="left:303.6px;top:546.0px;width:350.6px">недели до начала роста заболеваемости.</div>
<div class="t" style="left:305.5px;top:565.1px;width:348.5px">Провакцинироваться можно в</div>
<div class="t" style="left:305.5px;top:584.6px;width:348.5px">медицинском учреждении, а также</div>
<div class="t" style="left:305.5px;top:603.4px;width:348.5px">прививку могут сделать мобильные</div>
<div class="t tl" style="left:294.2px;top:621.0px;transform:scaleX(1.0108)">прививочные бригады.</div>
<div class="t" style="left:273.2px;top:640.9px;width:380.8px">Детям вакцинопрофилактику организуют в</div>
<div class="t tl" style="left:169.4px;top:659.6px;transform:scaleX(0.9979)">ДДУ и школах, только с письменного разрешения родителей.</div>
<div class="t" style="left:747.6px;top:194.0px;width:499.4px">Пользуйтесь маской в местах скопления людей.</div>
<div class="t" style="left:747.6px;top:216.3px;width:345.8px">Периодичность смены маски каждые 3</div>
<div class="t tl" style="left:747.6px;top:237.8px;transform:scaleX(0.9936)">часа;</div>
<div class="t tl" style="left:933.6px;top:260.0px;transform:scaleX(1.0021)">Соблюдайте</div>
<div class="t" style="left:879.9px;top:282.2px;width:213.5px">правила личной гигиены</div>
<div class="t" style="left:879.9px;top:303.7px;width:213.5px">(регулярно мойте руки,</div>
<div class="t" style="left:879.9px;top:325.9px;width:213.5px">особенно после посещения</div>
<div class="t tl" style="left:879.9px;top:347.0px;transform:scaleX(1.0257)">улицы);</div>
<div class="t" style="left:933.6px;top:370.0px;width:168.7px">Сократите время</div>
<div class="t" style="left:879.9px;top:391.5px;width:222.4px">пребывания в местах</div>
<div class="t tl" style="left:747.6px;top:412.9px;transform:scaleX(0.9981)">массовых скоплений людей;</div>
<div class="t tl" style="left:747.6px;top:434.7px;transform:scaleX(1.0199)">Проветривайте и делайте влажную уборку в</div>
<div class="t" style="left:879.9px;top:456.2px;width:222.4px">помещении, в котором</div>
<div class="t tl" style="left:879.9px;top:477.6px;transform:scaleX(0.9759)">находитесь;</div>
<div class="t" style="left:933.6px;top:499.4px;width:314.3px">Укрепляйте иммунитет</div>
<div class="t tl" style="left:879.9px;top:520.9px;transform:scaleX(1.0148)">(сбалансированное питание, прием продуктов</div>
<div class="t" style="left:879.9px;top:544.3px;width:210.3px">богатых витаминами,</div>
<div class="t" style="left:879.9px;top:566.6px;width:210.3px">особенно содержащих</div>
<div class="t" style="left:747.6px;top:588.8px;width:342.6px">витамин С (клюква, брусника, лимон и</div>
<div class="t tl" style="left:747.6px;top:611.0px;transform:scaleX(0.9824)">др.);</div>
<div class="t" style="left:817.2px;top:631.3px;width:273.0px">Ведите здоровый образ жизни,</div>
<div class="t" style="left:813.1px;top:653.5px;width:277.1px">высыпайтесь и регулярно</div>
<div class="t tl" style="left:883.1px;top:675.0px;transform:scaleX(1.0162)">занимайтесь физкультурой;</div>
<div class="t tl" style="left:937.3px;top:698.0px;transform:scaleX(0.9817)">Одевайтесь по погоде.</div>
<svg class="a" style="left:358.0px;top:291.5px" width="14" height="13" viewBox="0 0 14 13"><use href="#ck"/></svg>
<svg class="a" style="left:363.5px;top:313.0px" width="14" height="13" viewBox="0 0 14 13"><use href="#ck"/></svg>
<svg class="a" style="left:346.2px;top:334.2px" width="14" height="13" viewBox="0 0 14 13"><use href="#ck"/></svg>
<svg class="a" style="left:211.2px;top:356.5px" width="14" height="13" viewBox="0 0 14 13"><use href="#ck"/></svg>
<svg class="a" style="left:148.4px;top:400.9px" width="14" height="13" viewBox="0 0 14 13"><use href="#ck"/></svg>
<svg class="a" style="left:148.4px;top:444.5px" width="14" height="13" viewBox="0 0 14 13"><use href="#ck"/></svg>
<svg class="a" style="left:720.1px;top:195.5px" width="14" height="13" viewBox="0 0 14 13"><use href="#ck"/></svg>
<svg class="a" style="left:891.2px;top:261.5px" width="14" height="13" viewBox="0 0 14 13"><use href="#ck"/></svg>
<svg class="a" style="left:891.2px;top:371.5px" width="14" height="13" viewBox="0 0 14 13"><use href="#ck"/></svg>
<svg class="a" style="left:720.0px;top:436.2px" width="14" height="13" viewBox="0 0 14 13"><use href="#ck"/></svg>
<svg class="a" style="left:891.0px;top:500.9px" width="14" height="13" viewBox="0 0 14 13"><use href="#ck"/></svg>
<svg class="a" style="left:786.0px;top:632.8px" width="14" height="13" viewBox="0 0 14 13"><use href="#ck"/></svg>
<svg class="a" style="left:896.0px;top:699.5px" width="14" height="13" viewBox="0 0 14 13"><use href="#ck"/></svg>
<div class="a doc hd" style="left:516.2px;top:106.2px;font-size:29px;line-height:34px;transform:scaleX(1.1011)">Профилактика ГРИППА</div>
<div class="a doc hd" style="left:315.3px;top:151.5px;font-size:27px;line-height:32px;transform:scaleX(1.0743)">Специфическая</div>
<div class="a doc hd" style="left:926.8px;top:151.1px;font-size:27px;line-height:32px;transform:scaleX(1.0896)">Неспецифическая</div>
<!--/TEXT-->

<!-- ===== RIGHT SCROLL ===== -->
<div class="a" style="left:1335px;top:81px;width:8px;height:647px;background:#ababab;border-left:1px solid #616161"></div>
<div class="a" style="left:1343px;top:81px;width:17px;height:647px;background:linear-gradient(90deg,#e6e6e6,#f0f0f0 50%,#f2f2f2)"></div>
<svg class="a" style="left:1343px;top:81px" width="17" height="647" viewBox="1343 81 17 647">
<path d="M1346,84.5 L1357,84.5 M1346,87.5 L1357,87.5" stroke="#000" stroke-width="1"/>
<path d="M1349,84 L1351.5,81.5 L1354,84 Z M1349,88 L1351.5,90.5 L1354,88 Z" fill="#000"/>
<defs><linearGradient id="sbg" x1="0" y1="0" x2="1" y2="0"><stop offset="0" stop-color="#f4f4f4"/><stop offset="0.5" stop-color="#e8e8e8"/><stop offset="0.8" stop-color="#d4d4d4"/><stop offset="1" stop-color="#e4e4e4"/></linearGradient></defs>
<rect x="1344.5" y="91.5" width="14" height="15" rx="1.5" fill="url(#sbg)" stroke="#a6a6a6"/>
<path d="M1348.5,101 L1351.5,97.5 L1354.5,101 Z" fill="#555"/>
<rect x="1344.5" y="416.5" width="14" height="86" rx="1.5" fill="url(#sbg)" stroke="#a6a6a6"/>
<path d="M1348,457.5 L1355,457.5 M1348,459.8 L1355,459.8 M1348,462 L1355,462" stroke="#555" stroke-width="1"/>
<rect x="1344.5" y="712.5" width="14" height="15" rx="1.5" fill="url(#sbg)" stroke="#a6a6a6"/>
<path d="M1348.5,718 L1351.5,721.5 L1354.5,718 Z" fill="#555"/>
</svg>

<!-- ===== TASKBAR ===== -->
<div class="a" style="left:0;top:728px;width:1360px;height:40px;overflow:hidden;background:linear-gradient(90deg,#221f27 0%,#2b2530 12%,#3a303c 22%,#463a45 35%,#4a3f48 45%,#3e3a40 55%,#34313a 65%,#2a2a32 75%,#1f1e25 85%,#1c1b22 100%)">
<div class="a" style="left:0;top:0;width:1360px;height:40px;background:linear-gradient(180deg,rgba(0,0,0,0.25),rgba(0,0,0,0) 30%,rgba(0,0,0,0.1))"></div>
<div class="a" style="left:560px;top:0;width:120px;height:40px;background:linear-gradient(100deg,rgba(80,100,60,0),rgba(90,110,70,0.35) 40%,rgba(90,70,110,0.3) 70%,rgba(0,0,0,0))"></div>
<div class="a" style="left:700px;top:0;width:200px;height:40px;background:linear-gradient(100deg,rgba(100,70,110,0),rgba(105,75,115,0.35) 50%,rgba(0,0,0,0))"></div>
<div class="a" style="left:600px;top:0;width:520px;height:40px;background:repeating-linear-gradient(75deg,rgba(120,90,130,0.0) 0px,rgba(120,90,130,0.22) 14px,rgba(80,100,70,0.18) 28px,rgba(0,0,0,0) 42px)"></div>
<div class="a" style="left:160px;top:0;width:440px;height:40px;background:repeating-linear-gradient(80deg,rgba(110,80,120,0.0) 0px,rgba(110,80,120,0.2) 18px,rgba(60,50,70,0.1) 36px,rgba(0,0,0,0) 50px)"></div>
<div class="a" style="left:0;top:0;width:1360px;height:1px;background:#0e0e10"></div>
<div class="a" style="left:0;top:1px;width:1360px;height:1px;background:rgba(160,160,170,0.45)"></div>
</div>
<!-- taskbar buttons -->
<div class="a" style="left:246px;top:729px;width:58px;height:38px;border:1px solid rgba(190,180,190,0.55);border-radius:3px;background:linear-gradient(160deg,rgba(255,255,255,0.22),rgba(255,255,255,0.08))"></div>
<div class="a" style="left:308px;top:729px;width:58px;height:38px;border:1px solid rgba(190,180,190,0.55);border-radius:3px;background:linear-gradient(160deg,rgba(255,255,255,0.22),rgba(255,255,255,0.08))"></div>
<div class="a" style="left:494px;top:729px;width:58px;height:38px;border:1px solid #e4e4e4;border-radius:3px;background:linear-gradient(135deg,#d8d8d8 0%,#b4b0b4 40%,#a8a8a0 70%,#c0c4bc 100%)"></div>
<svg class="a" style="left:0;top:728px" width="1360" height="40" viewBox="0 728 1360 40">
<defs>
<radialGradient id="orb" cx="0.5" cy="0.75" r="0.65"><stop offset="0" stop-color="#5ad4ff"/><stop offset="0.45" stop-color="#1f78c0"/><stop offset="1" stop-color="#123860"/></radialGradient>
<radialGradient id="ffx" cx="0.45" cy="0.55" r="0.55"><stop offset="0" stop-color="#3050c8"/><stop offset="0.4" stop-color="#6040c0"/><stop offset="0.55" stop-color="#f04a28"/><stop offset="1" stop-color="#ffb020"/></radialGradient>
<linearGradient id="sky" x1="0" y1="0" x2="0" y2="1"><stop offset="0" stop-color="#4ab8f0"/><stop offset="1" stop-color="#1088d8"/></linearGradient>
</defs>
<!-- start orb -->
<circle cx="27" cy="748.5" r="19" fill="url(#orb)" stroke="#3a5878" stroke-width="1"/>
<ellipse cx="27" cy="740" rx="14" ry="8" fill="#fff" opacity="0.15"/>
<path d="M17,741 C20,739 23,739 26,741 L25,747 C22,745 19,745 16,747 Z" fill="#f06030"/>
<path d="M27.5,741.5 C30.5,743 33.5,743 37,741 L36,747 C33,749 30,749 26.5,747.5 Z" fill="#8cc83c"/>
<path d="M16,748.5 C19,746.5 22,746.5 25,748.5 L24,754.5 C21,752.5 18,752.5 15,754.5 Z" fill="#3aa0e8"/>
<path d="M26,749 C29,750.5 32,750.5 36,748.5 L35,754.5 C32,756.5 29,756.5 25,755 Z" fill="#f8c030"/>
<!-- IE -->
<ellipse cx="89" cy="748" rx="15" ry="6" transform="rotate(-40 89 748)" fill="none" stroke="#e8b820" stroke-width="2.2"/>
<circle cx="89.5" cy="748" r="10.5" fill="#3cb0e8"/>
<circle cx="89.5" cy="748" r="5" fill="#141218"/>
<rect x="84" y="746.5" width="12" height="3" fill="#3cb0e8"/>
<rect x="93" y="749.5" width="8" height="3.5" fill="#141218"/>
<!-- WMP -->
<rect x="143" y="737" width="20" height="25" fill="#8cc0e8" stroke="#c8e0f4" stroke-width="1"/>
<rect x="137" y="736.6" width="22" height="24" fill="#a8d0f0" stroke="#d0e6f8" stroke-width="1"/>
<circle cx="148" cy="748.5" r="8" fill="#f07a20" stroke="#fff" stroke-width="1"/>
<path d="M145.5,744 L152,748.5 L145.5,753 Z" fill="#fff"/>
<!-- Explorer -->
<path d="M197,738 L210,738 L212,740 L229,740 L229,762 L197,762 Z" fill="#e8d080"/>
<rect x="199" y="737" width="3" height="2" fill="#30c040"/><rect x="208" y="738" width="3" height="2" fill="#e03030"/><rect x="217" y="740" width="4" height="2" fill="#3080e0"/>
<path d="M197,744 L229,744 L229,762 L197,762 Z" fill="#f4e4a0"/>
<path d="M203,753 L223,753 L223,764 L219,764 L219,757 L207,757 L207,764 L203,764 Z" fill="#6ab8e8"/>
<!-- Firefox -->
<circle cx="275" cy="747.5" r="15" fill="url(#ffx)"/>
<path d="M270,735 C280,732 290,738 290,750 C288,742 280,738 272,740 Z" fill="#ffcc30"/>
<circle cx="276" cy="748" r="6.5" fill="#2a48c0"/>
<path d="M262,745 C265,752 272,757 280,756 C275,760 265,758 262,750 Z" fill="#ff6a20"/>
<!-- Word -->
<rect x="321" y="732" width="25" height="29" fill="#fff" stroke="#2a5fc0" stroke-width="1.2"/>
<rect x="321" y="732" width="25" height="14" fill="#d8e6fa"/>
<path d="M324,737 L327.5,737 L329.5,748 L332,740 L335,740 L337.5,748 L339.5,737 L343,737 L339,753 L336,753 L333.5,745 L331,753 L328,753 Z" fill="#1e58c0"/>
<path d="M338,748 L351,752 L348,761 L335,757 Z" fill="#fff" stroke="#90a8d0" stroke-width="0.8"/>
<!-- Excel -->
<rect x="384" y="732" width="25" height="29" fill="#fff" stroke="#2a8a3a" stroke-width="1.2"/>
<rect x="384" y="732" width="25" height="12" fill="#c8e8c8"/>
<path d="M387,737 L392,737 L396,744 L400,737 L405,737 L398.5,747 L405,757 L400,757 L396,750 L392,757 L387,757 L393.5,747 Z" fill="#2a8a3a"/>
<path d="M400,748 L413,752 L410,761 L397,757 Z" fill="#eef6ee" stroke="#80b880" stroke-width="0.8"/>
<!-- Skype -->
<circle cx="458" cy="745" r="11" fill="url(#sky)"/>
<circle cx="452" cy="739" r="6" fill="url(#sky)"/>
<circle cx="464" cy="757" r="6" fill="#1088d8"/>
<path d="M464,741.5 C462,739 453,739 453,743.5 C453,748 463.5,746.5 463.5,751 C463.5,755 455,755 452.5,752" fill="none" stroke="#fff" stroke-width="2.8" stroke-linecap="round"/>
<!-- Foxit -->
<path d="M507,732 L531,732 L539,740 L539,764 L507,764 Z" fill="#f28a1e"/>
<path d="M532,732 L539,732 L539,739 Z" fill="#f28a1e" opacity="0.5"/>
<path d="M531,732 L531,740 L539,740" fill="none" stroke="#c8c8c8" stroke-width="0.8"/>
<path d="M530,740 C526,735 518,735 515,741 C512,747 516,754 523,754 C528,754 532,750 531,745 L524,745 L527,749 C524,751 519,749 519,745 C519,740 525,738 528,742 Z" fill="#fff"/>
<text x="523" y="762" font-family="Liberation Sans" font-weight="bold" font-size="7.5" fill="#fff" text-anchor="middle">PDF</text>
<!-- tray -->
<rect x="1126" y="741" width="15" height="15" fill="#d0103a"/>
<path d="M1129,750 L1135,744 L1139,748 L1133,754 Z" fill="none" stroke="#fff" stroke-width="1.4"/>
<circle cx="1157.5" cy="748.5" r="7.5" fill="#1a9ae0"/>
<path d="M1161,745 C1160,743.5 1154.5,743.5 1154.5,746.5 C1154.5,749.5 1160.5,748 1160.5,751 C1160.5,753.5 1155,753.5 1154,751.5" fill="none" stroke="#fff" stroke-width="1.8"/>
<path d="M1174,750 L1182,743 L1190,750 L1190,756 L1174,756 Z" fill="#f0a020"/>
<rect x="1181" y="741" width="6" height="3" fill="#f0a020"/>
<rect x="1181" y="748" width="2" height="5" fill="#fff"/>
<rect x="1202" y="744" width="11" height="8" fill="none" stroke="#fff" stroke-width="1.5"/>
<rect x="1199" y="741" width="3" height="5" fill="#fff"/>
<rect x="1200" y="746" width="1.5" height="10" fill="#fff"/>
<rect x="1203" y="755" width="9" height="1.5" fill="#fff"/>
<path d="M1223,745 L1226,745 L1230,741.5 L1230,756 L1226,752 L1223,752 Z" fill="#fff"/>
<path d="M1232,745 C1233.5,747 1233.5,750 1232,752 M1234.5,743 C1237,746 1237,751 1234.5,754" fill="none" stroke="#fff" stroke-width="1.3"/>
<rect x="1246" y="741" width="1.6" height="16" fill="#fff"/>
<path d="M1248,742 L1254,742 L1256,744 L1261,744 L1259,748 L1261,751 L1255,751 L1253,749 L1248,749 Z" fill="#fff"/>
</svg>
<div class="a" style="left:1095px;top:738px;font:12px/14px 'Liberation Sans',sans-serif;color:#e8e8ec;white-space:nowrap">RU</div>
<div class="a" style="left:1293px;top:733px;font:12px/14px 'Liberation Sans',sans-serif;color:#f0f0f4;white-space:nowrap">12:45</div>
<div class="a" style="left:1280px;top:750px;font:11.6px/14px 'Liberation Sans',sans-serif;color:#f0f0f4;white-space:nowrap">22.10.2019</div>
<div class="a" style="left:1346px;top:730px;width:14px;height:37px;border:1px solid rgba(200,200,210,0.6);border-right:none;border-radius:2px 0 0 2px;background:linear-gradient(160deg,rgba(255,255,255,0.2),rgba(255,255,255,0.05))"></div>


</body></html>
